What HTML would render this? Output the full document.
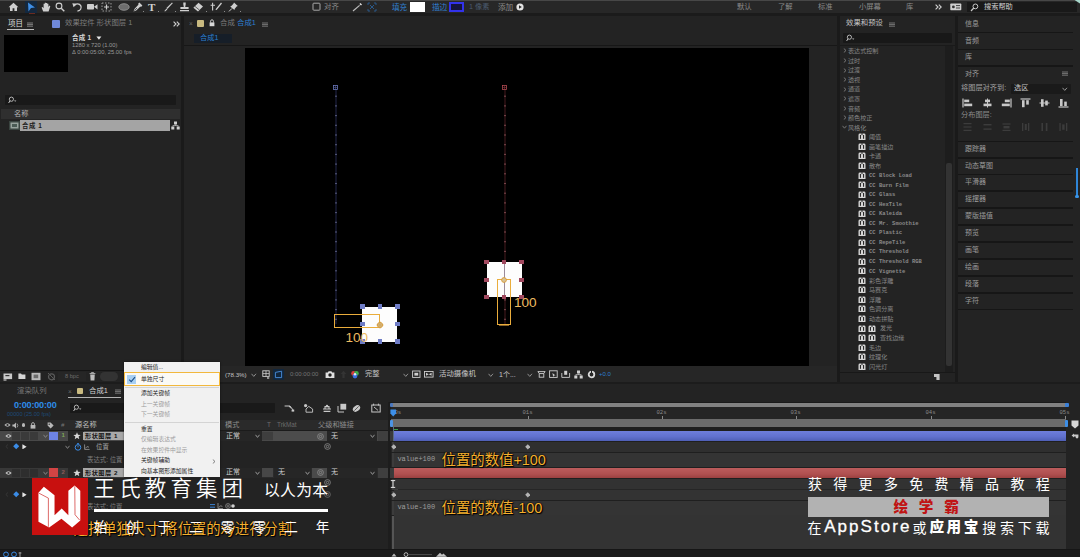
<!DOCTYPE html>
<html><head><meta charset="utf-8">
<style>
*{margin:0;padding:0;box-sizing:border-box}
html,body{width:1080px;height:557px;overflow:hidden;background:#232323}
body{position:relative;font-family:"Liberation Sans","Noto Sans CJK SC",sans-serif;font-size:7.2px;color:#9a9a9a}
.a{position:absolute}
.t{position:absolute;white-space:nowrap}
.m{font-family:"Liberation Mono","Noto Sans CJK SC",monospace}
</style></head><body>
<div class="a" style="left:0px;top:0px;width:1080px;height:14px;background:#272727;"></div>
<div class="a" style="left:0px;top:0px;width:1080px;height:1.2px;background:#474747;"></div>
<div class="a" style="left:0px;top:13.4px;width:1080px;height:2.4px;background:#1b1b1b;"></div>
<div class="a" style="left:0px;top:15.8px;width:181px;height:366px;background:#232323;"></div>
<div class="a" style="left:181px;top:16px;width:2.6px;height:366px;background:#1a1a1a;"></div>
<div class="a" style="left:184px;top:15.8px;width:653px;height:366px;background:#232323;"></div>
<div class="a" style="left:837px;top:16px;width:2.6px;height:366px;background:#1a1a1a;"></div>
<div class="a" style="left:840px;top:15.8px;width:115px;height:366px;background:#232323;"></div>
<div class="a" style="left:955px;top:16px;width:2.6px;height:366px;background:#1a1a1a;"></div>
<div class="a" style="left:958px;top:15.8px;width:122px;height:366px;background:#232323;"></div>
<div class="a" style="left:0px;top:381.8px;width:1080px;height:2px;background:#1c1c1c;"></div>
<div class="a" style="left:0px;top:384px;width:1080px;height:173px;background:#232323;"></div>
<svg class="a" style="left:8px;top:2px;" width="11" height="10" viewBox="0 0 11 10"><path d="M5.5 0.8 L0.6 5.2 H2 V9 H4.6 V6.2 H6.4 V9 H9 V5.2 H10.4 Z" fill="#cfcfcf"/></svg>
<div class="a" style="left:25px;top:1px;width:12px;height:12px;background:#14283e;"></div>
<svg class="a" style="left:26px;top:2px;" width="10" height="10" viewBox="0 0 10 10"><path d="M2 0.5 L9 5.5 L5 6 L2.5 9.6 Z" fill="#3f8fe6"/></svg>
<div class="a" style="left:29px;top:13px;width:6px;height:1px;background:#6a2a20;"></div>
<svg class="a" style="left:41px;top:2px;" width="10" height="10" viewBox="0 0 10 10"><path d="M2.2 9.5 L0.6 5.6 L1.6 5 L2.6 6.2 V1.8 H3.8 V4.6 V0.8 H5 V4.5 V1 H6.2 V4.6 V1.8 H7.4 V5 L8.4 3.6 L9.3 4.2 L7.6 9.5 Z" fill="#cfcfcf"/></svg>
<svg class="a" style="left:55px;top:2px;" width="10" height="10" viewBox="0 0 10 10"><circle cx="4" cy="4" r="2.9" fill="none" stroke="#cfcfcf" stroke-width="1.1"/><path d="M6.2 6.2 L9.3 9.3" stroke="#cfcfcf" stroke-width="1.4"/></svg>
<svg class="a" style="left:72px;top:2px;" width="11" height="10" viewBox="0 0 11 10"><path d="M2.5 3.5 A3.6 3.6 0 1 1 5.5 9" fill="none" stroke="#cfcfcf" stroke-width="1.3"/><path d="M0.3 1.2 L4.8 1.8 L1.6 5.2 Z" fill="#cfcfcf"/></svg>
<svg class="a" style="left:87px;top:3px;" width="11" height="8" viewBox="0 0 11 8"><rect x="0" y="1" width="7" height="5.6" rx="0.8" fill="#cfcfcf"/><path d="M7 3.8 L10.5 1.2 V6.4 Z" fill="#cfcfcf"/></svg>
<svg class="a" style="left:101px;top:2px;" width="11" height="10" viewBox="0 0 11 10"><rect x="1" y="1" width="9" height="8" fill="none" stroke="#9a9a9a" stroke-width="1" stroke-dasharray="1.5 1.5"/><path d="M5.5 2.5 V7.5 M3 5 H8" stroke="#cfcfcf" stroke-width="1.2"/></svg>
<svg class="a" style="left:118px;top:3px;" width="12" height="8" viewBox="0 0 12 8"><ellipse cx="6" cy="4" rx="5.2" ry="3.3" fill="#6e6e6e" stroke="#9a9a9a" stroke-width="0.8"/></svg>
<svg class="a" style="left:133px;top:1.6px;" width="10" height="10" viewBox="0 0 10 10"><path d="M6.4 0.6 L9.4 3.6 L8 5 L7.4 4.4 L3.2 8.4 L0.5 9.5 L1.6 6.8 L5.6 2.6 L5 2 Z" fill="#cfcfcf"/><path d="M1.4 8.6 L4 6" stroke="#2a2a2a" stroke-width="0.7"/></svg>
<div class="t" style="left:148px;top:0.6px;font-size:11px;line-height:13.2px;color:#cfcfcf;font-family:'Liberation Serif',serif;font-weight:bold">T</div>
<svg class="a" style="left:164px;top:2px;" width="9" height="10" viewBox="0 0 9 10"><path d="M8 0.5 L8.8 1.3 L3.4 7 L2.4 6 Z" fill="#cfcfcf"/><path d="M2.6 6.4 L3.4 7.4 L1 9.6 L0.4 9 Z" fill="#cfcfcf"/></svg>
<svg class="a" style="left:179px;top:2px;" width="11" height="10" viewBox="0 0 11 10"><path d="M4.3 0.6 H6.7 V2.2 L6.2 5 H9.6 V7 H1.4 V5 H4.8 L4.3 2.2 Z M1 8 H10 V9.2 H1 Z" fill="#cfcfcf"/></svg>
<svg class="a" style="left:192px;top:2px;" width="12" height="10" viewBox="0 0 12 10"><path d="M6.5 0.8 L11 4.4 L6 9.4 L1.4 5.8 Z" fill="#cfcfcf"/><path d="M3 4.4 L7.4 8" stroke="#444" stroke-width="0.8"/></svg>
<svg class="a" style="left:210px;top:2px;" width="13" height="10" viewBox="0 0 13 10"><path d="M11 0.6 L12 1.4 L6.6 8 L5.4 7.4 Z" fill="#cfcfcf"/><path d="M2.6 0.8 V8.6 M0.6 3.2 H5" stroke="#cfcfcf" stroke-width="1.1"/></svg>
<svg class="a" style="left:228px;top:2px;" width="11" height="10" viewBox="0 0 11 10"><path d="M6 0.6 L9.8 4 L8.6 4.6 L6.8 6.8 L6.4 8 L2.2 4.4 L3.6 3.8 L5.4 1.8 Z" fill="#cfcfcf"/><path d="M4 6.4 L1 9.4" stroke="#cfcfcf" stroke-width="1"/></svg>
<div class="a" style="left:143px;top:11px;width:1px;height:1px;background:#8a8a8a;"></div>
<div class="a" style="left:158px;top:11px;width:1px;height:1px;background:#8a8a8a;"></div>
<div class="a" style="left:175px;top:11px;width:1px;height:1px;background:#8a8a8a;"></div>
<div class="a" style="left:206px;top:11px;width:1px;height:1px;background:#8a8a8a;"></div>
<div class="a" style="left:224px;top:11px;width:1px;height:1px;background:#8a8a8a;"></div>
<div class="a" style="left:240px;top:11px;width:1px;height:1px;background:#8a8a8a;"></div>
<svg class="a" style="left:312px;top:2px;" width="9" height="10" viewBox="0 0 9 10"><rect x="1" y="1.2" width="7" height="7" rx="0.8" fill="none" stroke="#a8a8a8" stroke-width="1"/></svg>
<div class="t" style="left:324px;top:2.76px;font-size:7.4px;line-height:8.88px;color:#8a8a8a;">对齐</div>
<svg class="a" style="left:352px;top:2px;" width="12" height="10" viewBox="0 0 12 10"><path d="M1 9 L7.6 3.4" stroke="#bdbdbd" stroke-width="1.2"/><path d="M8.4 1 L10 2.6 L9 3.6 L7.4 2 Z" fill="#e6e6e6"/></svg>
<svg class="a" style="left:367px;top:2px;" width="10" height="10" viewBox="0 0 10 10"><path d="M1 3 V1 H3 M7 1 H9 V3 M9 7 V9 H7 M3 9 H1 V7 M3 3 L7 7 M7 3 L3 7" fill="none" stroke="#2b5f94" stroke-width="0.9"/></svg>
<div class="t" style="left:392px;top:2.64px;font-size:7.6px;line-height:9.12px;color:#2f7fd0;">填充</div>
<div class="a" style="left:410px;top:2px;width:15px;height:10px;background:#ffffff;"></div>
<div class="t" style="left:432px;top:2.64px;font-size:7.6px;line-height:9.12px;color:#2f7fd0;">描边</div>
<div class="a" style="left:448.5px;top:1.8px;width:15px;height:10.6px;background:#14143c;border:2px solid #3232ea"></div>
<div class="t" style="left:469px;top:2.88px;font-size:7.2px;line-height:8.64px;color:#4a5a6e;">1 像素</div>
<div class="t" style="left:498px;top:2.64px;font-size:7.6px;line-height:9.12px;color:#8c8c8c;">添加</div>
<svg class="a" style="left:516px;top:3px;" width="8" height="8" viewBox="0 0 8 8"><circle cx="4" cy="4" r="3.6" fill="#e2e2e2"/><path d="M3 2.2 L5.8 4 L3 5.8 Z" fill="#262626"/></svg>
<div class="t" style="left:737px;top:2.82px;font-size:7.3px;line-height:8.76px;color:#8a8a8a;">默认</div>
<div class="t" style="left:778px;top:2.82px;font-size:7.3px;line-height:8.76px;color:#8a8a8a;">了解</div>
<div class="t" style="left:818px;top:2.82px;font-size:7.3px;line-height:8.76px;color:#8a8a8a;">标准</div>
<div class="t" style="left:859px;top:2.82px;font-size:7.3px;line-height:8.76px;color:#8a8a8a;">小屏幕</div>
<div class="t" style="left:906px;top:2.82px;font-size:7.3px;line-height:8.76px;color:#8a8a8a;">库</div>
<svg class="a" style="left:935px;top:4px;" width="7" height="6" viewBox="0 0 7 6"><path d="M0.6 0.6 L3 3 L0.6 5.4 M3.8 0.6 L6.2 3 L3.8 5.4" fill="none" stroke="#d0d0d0" stroke-width="1.1"/></svg>
<svg class="a" style="left:950px;top:3px;" width="12" height="8" viewBox="0 0 12 8"><rect x="0.3" y="0.6" width="11" height="6.6" rx="0.6" fill="#d0d0d0"/><circle cx="3.4" cy="3.9" r="1.4" fill="#333"/><path d="M6 2.6 H10 M6 5 H10" stroke="#333" stroke-width="0.9"/></svg>
<div class="a" style="left:967px;top:1.6px;width:110px;height:10.8px;background:#191919;"></div>
<svg class="a" style="left:970px;top:3px;" width="9" height="9" viewBox="0 0 9 9"><circle cx="5.4" cy="3.4" r="2.4" fill="none" stroke="#c8c8c8" stroke-width="1"/><path d="M3.8 5 L1 8" stroke="#c8c8c8" stroke-width="1.2"/></svg>
<div class="t" style="left:984px;top:3.08px;font-size:7.2px;line-height:8.64px;color:#d2d2d2;">搜索帮助</div>
<svg class="a" style="left:1066px;top:0px;" width="14" height="8" viewBox="0 0 14 8"><path d="M8.6 0 H14 V3.6 Z" fill="#a8d8cc"/></svg>
<div class="t" style="left:8px;top:19.4px;font-size:7.5px;line-height:9.0px;color:#dcdcdc;">项目</div>
<svg class="a" style="left:27.0px;top:21.6px;" width="6.4" height="5" viewBox="0 0 6.4 5"><path d="M0 1 H6 M0 2.6 H6 M0 4.2 H6" stroke="#b0b0b0" stroke-width="0.65"/></svg>
<div class="a" style="left:7px;top:29px;width:27px;height:1.4px;background:#bdbdbd;"></div>
<div class="a" style="left:52px;top:20px;width:7.5px;height:7.5px;background:#6f88d8;border-radius:1px"></div>
<div class="t" style="left:65px;top:19.36px;font-size:7.4px;line-height:8.88px;color:#7c7c7c;">效果控件 形状图层 1</div>
<svg class="a" style="left:172.5px;top:20.8px;" width="7" height="6" viewBox="0 0 7 6"><path d="M0.6 0.6 L3 3 L0.6 5.4 M3.8 0.6 L6.2 3 L3.8 5.4" fill="none" stroke="#d0d0d0" stroke-width="1.1"/></svg>
<div class="a" style="left:4px;top:35px;width:64px;height:37px;background:#000;"></div>
<div class="t" style="left:72px;top:34.1px;font-size:6.5px;line-height:7.8px;color:#d6d6d6;font-weight:bold;letter-spacing:0.2px">合成 1</div>
<svg class="a" style="left:96px;top:36px;" width="6" height="4.4" viewBox="0 0 6 4.4"><path d="M0.4 0.6 H5.4 L2.9 3.8 Z" fill="#e6e6e6"/></svg>
<div class="t" style="left:72px;top:41.92px;font-size:5.8px;line-height:6.96px;color:#9a9a9a;">1280 x 720 (1.00)</div>
<div class="t" style="left:72px;top:48.92px;font-size:5.8px;line-height:6.96px;color:#9a9a9a;">Δ 0:00:05:00, 25.00 fps</div>
<div class="a" style="left:5px;top:95px;width:171px;height:10px;background:#191919;border-radius:1px"></div>
<svg class="a" style="left:8px;top:96px;" width="9" height="8" viewBox="0 0 9 8"><circle cx="3.4" cy="3.2" r="2.1" fill="none" stroke="#c4c4c4" stroke-width="0.9"/><path d="M2 4.8 L0.6 7" stroke="#c4c4c4" stroke-width="1"/><path d="M6 4.4 H8.4 L7.2 5.8 Z" fill="#c4c4c4"/></svg>
<div class="a" style="left:1px;top:109px;width:179px;height:10px;background:#2f2f2f;"></div>
<div class="t" style="left:14px;top:110.08px;font-size:7.2px;line-height:8.64px;color:#b4b4b4;">名称</div>
<div class="a" style="left:9px;top:121px;width:11px;height:9px;background:#3a4440;"></div>
<svg class="a" style="left:10px;top:122px;" width="9" height="7" viewBox="0 0 9 7"><rect x="0.5" y="0.5" width="8" height="6" fill="#97a39d"/><rect x="2" y="2" width="5" height="3" fill="#4a5a54"/></svg>
<div class="a" style="left:20px;top:120px;width:150px;height:10.5px;background:#a4a4a4;"></div>
<div class="t" style="left:22px;top:121.56px;font-size:6.4px;line-height:7.68px;color:#1c1c1c;font-weight:bold;letter-spacing:0.6px">合成 1</div>
<svg class="a" style="left:171px;top:121px;" width="9" height="9" viewBox="0 0 9 9"><rect x="3" y="0.5" width="3" height="3" fill="#d0d0d0"/><rect x="0.3" y="5.5" width="3" height="3" fill="#d0d0d0"/><rect x="5.7" y="5.5" width="3" height="3" fill="#d0d0d0"/><path d="M4.5 3.5 V4.6 M1.8 5.5 V4.6 H7.2 V5.5" stroke="#d0d0d0" stroke-width="0.7" fill="none"/></svg>
<div class="a" style="left:0px;top:370px;width:181px;height:1px;background:#151515;"></div>
<div class="a" style="left:0px;top:371px;width:181px;height:11px;background:#232323;"></div>
<svg class="a" style="left:3px;top:372px;" width="10" height="9" viewBox="0 0 10 9"><rect x="0.5" y="1.5" width="8.6" height="5.6" fill="#c8c8c8"/><rect x="2.4" y="3" width="4" height="1.2" fill="#333"/><rect x="0.5" y="7.4" width="3" height="1.2" fill="#c8c8c8"/></svg>
<svg class="a" style="left:18px;top:373px;" width="8" height="7" viewBox="0 0 8 7"><path d="M0.4 0.6 H3 L3.8 1.4 H7.4 V6 H0.4 Z" fill="#d4d4d4"/></svg>
<svg class="a" style="left:31px;top:372px;" width="10" height="9" viewBox="0 0 10 9"><rect x="0.5" y="0.8" width="9" height="7.4" fill="#b8b8b8"/><rect x="2.6" y="2.6" width="4.6" height="3.6" fill="#6a6a6a"/></svg>
<svg class="a" style="left:47px;top:372px;" width="9" height="9" viewBox="0 0 9 9"><circle cx="4.5" cy="4.8" r="3" fill="none" stroke="#5a5a5a" stroke-width="1.2"/><path d="M1 1 L8 8" stroke="#5a5a5a" stroke-width="1"/></svg>
<div class="a" style="left:58px;top:372px;width:28px;height:9px;background:#262626;"></div>
<div class="t" style="left:65px;top:373.24px;font-size:5.6px;line-height:6.72px;color:#6e6e6e;">8 bpc</div>
<svg class="a" style="left:89px;top:372px;" width="7" height="9" viewBox="0 0 7 9"><path d="M0.6 1.6 H6.4 M2.4 1.4 V0.6 H4.6 V1.4" stroke="#bdbdbd" stroke-width="0.9" fill="none"/><path d="M1.2 2.6 H5.8 L5.4 8.4 H1.6 Z" fill="#bdbdbd"/></svg>
<div class="a" style="left:100px;top:372px;width:18px;height:9px;background:#333;border-radius:4.5px"></div>
<div class="t" style="left:189px;top:19.7px;font-size:6.5px;line-height:7.8px;color:#6a6a6a;">×</div>
<div class="a" style="left:197px;top:20px;width:7px;height:7px;background:#c9ba80;border-radius:1px"></div>
<svg class="a" style="left:209px;top:19px;" width="6" height="8" viewBox="0 0 6 8"><path d="M1.6 3.6 V2.2 A1.4 1.4 0 0 1 4.4 2.2 V3.6" fill="none" stroke="#d8d8d8" stroke-width="0.9"/><rect x="0.6" y="3.4" width="4.8" height="3.8" fill="#d8d8d8"/></svg>
<div class="t" style="left:220px;top:19.36px;font-size:7.4px;line-height:8.88px;color:#7a7a7a;">合成</div>
<div class="t" style="left:237px;top:19.36px;font-size:7.4px;line-height:8.88px;color:#2d7fd0;">合成1</div>
<svg class="a" style="left:262.0px;top:21.6px;" width="6.4" height="5" viewBox="0 0 6.4 5"><path d="M0 1 H6 M0 2.6 H6 M0 4.2 H6" stroke="#a0a0a0" stroke-width="0.65"/></svg>
<div class="a" style="left:194px;top:34px;width:38px;height:8.5px;background:#161e28;"></div>
<div class="t" style="left:200px;top:33.88px;font-size:7.2px;line-height:8.64px;color:#2d7fd0;">合成1</div>
<div class="a" style="left:184px;top:45px;width:653px;height:1.2px;background:#171717;"></div>
<div class="a" style="left:245px;top:48px;width:564px;height:318px;background:#000;"></div>
<div class="a" style="left:184px;top:366px;width:653px;height:16px;background:#262626;"></div>
<div class="t" style="left:225px;top:371.08px;font-size:6.2px;line-height:7.44px;color:#c4c4c4;">(78.3%)</div>
<svg class="a" style="left:251px;top:373px;" width="5.5" height="4.5" viewBox="0 0 5.5 4.5"><path d="M0.5 0.8 L2.75 3.4 L5.0 0.8" fill="none" stroke="#9a9a9a" stroke-width="0.9"/></svg>
<svg class="a" style="left:262px;top:370px;" width="9" height="9" viewBox="0 0 9 9"><rect x="0.8" y="0.8" width="6.4" height="5.6" fill="none" stroke="#cfcfcf" stroke-width="0.9"/><path d="M4 0.8 V6.4 M0.8 3.6 H7.2 M6 7 V9 M5 8 H7.4" stroke="#cfcfcf" stroke-width="0.8"/></svg>
<div class="a" style="left:273px;top:369px;width:11px;height:11px;background:#12263c;"></div>
<svg class="a" style="left:274px;top:370px;" width="9" height="9" viewBox="0 0 9 9"><path d="M1.4 2.4 L7.6 1.2 V7.6 H1.4 Z" fill="none" stroke="#4a90e0" stroke-width="0.9"/></svg>
<div class="t" style="left:290px;top:371.2px;font-size:6px;line-height:7.2px;color:#747474;">0:00:00:00</div>
<svg class="a" style="left:325px;top:370px;" width="10" height="9" viewBox="0 0 10 9"><path d="M0.6 2.4 H2.8 L3.6 1.2 H6.4 L7.2 2.4 H9.4 V8 H0.6 Z" fill="#e0e0e0"/><circle cx="5" cy="5" r="1.7" fill="#1f1f1f"/></svg>
<svg class="a" style="left:340px;top:370px;" width="7" height="9" viewBox="0 0 7 9"><path d="M3.5 0.8 L6.4 4 H4.6 V8 H2.4 V4 H0.6 Z" fill="#343434"/></svg>
<svg class="a" style="left:350px;top:370px;" width="10" height="10" viewBox="0 0 10 10"><circle cx="3.6" cy="3.4" r="2.4" fill="#d83a3a"/><circle cx="6.4" cy="3.4" r="2.4" fill="#3fae4a"/><circle cx="5" cy="6" r="2.4" fill="#3a6fe0"/><circle cx="5" cy="4.3" r="1.2" fill="#e8e8e8"/></svg>
<div class="t" style="left:365px;top:370.48px;font-size:7.2px;line-height:8.64px;color:#c8c8c8;">完整</div>
<svg class="a" style="left:403px;top:373px;" width="5.5" height="4.5" viewBox="0 0 5.5 4.5"><path d="M0.5 0.8 L2.75 3.4 L5.0 0.8" fill="none" stroke="#9a9a9a" stroke-width="0.9"/></svg>
<svg class="a" style="left:412px;top:370px;" width="9" height="9" viewBox="0 0 9 9"><rect x="0.6" y="1" width="7.4" height="6.4" fill="none" stroke="#cfcfcf" stroke-width="0.9"/><rect x="2.4" y="2.8" width="3.8" height="2.8" fill="#cfcfcf"/></svg>
<svg class="a" style="left:424px;top:371px;" width="10" height="7" viewBox="0 0 10 7"><rect x="0.5" y="0.5" width="8.6" height="5.6" fill="none" stroke="#cfcfcf" stroke-width="0.9"/><path d="M2 1.8 L4.8 3.3 L2 4.8 Z M7.6 1.8 L4.8 3.3 L7.6 4.8 Z" fill="#cfcfcf"/></svg>
<div class="t" style="left:439px;top:370.36px;font-size:7.4px;line-height:8.88px;color:#c8c8c8;">活动摄像机</div>
<svg class="a" style="left:488px;top:373px;" width="5.5" height="4.5" viewBox="0 0 5.5 4.5"><path d="M0.5 0.8 L2.75 3.4 L5.0 0.8" fill="none" stroke="#9a9a9a" stroke-width="0.9"/></svg>
<div class="t" style="left:499px;top:370.6px;font-size:7px;line-height:8.4px;color:#c8c8c8;">1个...</div>
<svg class="a" style="left:527px;top:373px;" width="5.5" height="4.5" viewBox="0 0 5.5 4.5"><path d="M0.5 0.8 L2.75 3.4 L5.0 0.8" fill="none" stroke="#9a9a9a" stroke-width="0.9"/></svg>
<svg class="a" style="left:537px;top:370px;" width="9" height="9" viewBox="0 0 9 9"><path d="M0.6 1.6 H8.4 M1.6 1.6 V3 M7.4 1.6 V3" stroke="#cfcfcf" stroke-width="0.9" fill="none"/><rect x="2.2" y="3.6" width="4.6" height="3.6" fill="none" stroke="#cfcfcf" stroke-width="0.9"/></svg>
<svg class="a" style="left:549px;top:370px;" width="9" height="9" viewBox="0 0 9 9"><rect x="0.6" y="0.8" width="7.6" height="6.6" fill="none" stroke="#cfcfcf" stroke-width="0.9"/><path d="M3.4 3 L6.6 5.4 L5 5.6 L4.2 7 Z" fill="#cfcfcf"/></svg>
<svg class="a" style="left:561px;top:370px;" width="10" height="9" viewBox="0 0 10 9"><path d="M0.8 3 V7.4 H8.6 V3" fill="none" stroke="#cfcfcf" stroke-width="0.9"/><rect x="3.2" y="0.8" width="3" height="4" fill="#cfcfcf"/></svg>
<svg class="a" style="left:574px;top:370px;" width="9" height="9" viewBox="0 0 9 9"><rect x="3" y="0.5" width="3" height="3" fill="#d0d0d0"/><rect x="0.3" y="5.5" width="3" height="3" fill="#d0d0d0"/><rect x="5.7" y="5.5" width="3" height="3" fill="#d0d0d0"/><path d="M4.5 3.5 V4.6 M1.8 5.5 V4.6 H7.2 V5.5" stroke="#d0d0d0" stroke-width="0.7" fill="none"/></svg>
<svg class="a" style="left:587px;top:370px;" width="9" height="9" viewBox="0 0 9 9"><circle cx="4.5" cy="4.5" r="2.8" fill="none" stroke="#d8d8d8" stroke-width="1.8"/><path d="M4.5 0 V3" stroke="#1f1f1f" stroke-width="1"/></svg>
<div class="t" style="left:599px;top:371.2px;font-size:6px;line-height:7.2px;color:#2d7fd0;">+0.0</div>
<svg class="a" style="left:333.5px;top:84px;" width="4" height="244" viewBox="0 0 4 244"><path d="M2 5.5 V240" stroke="#32386a" stroke-width="0.7"/><rect x="1.45" y="11.65" width="1.1" height="1.1" fill="#8488b8"/><rect x="1.45" y="21.35" width="1.1" height="1.1" fill="#8488b8"/><rect x="1.45" y="31.05" width="1.1" height="1.1" fill="#8488b8"/><rect x="1.45" y="40.75" width="1.1" height="1.1" fill="#8488b8"/><rect x="1.45" y="50.45" width="1.1" height="1.1" fill="#8488b8"/><rect x="1.45" y="60.15" width="1.1" height="1.1" fill="#8488b8"/><rect x="1.45" y="69.85" width="1.1" height="1.1" fill="#8488b8"/><rect x="1.45" y="79.55" width="1.1" height="1.1" fill="#8488b8"/><rect x="1.45" y="89.25" width="1.1" height="1.1" fill="#8488b8"/><rect x="1.45" y="98.95" width="1.1" height="1.1" fill="#8488b8"/><rect x="1.45" y="108.65" width="1.1" height="1.1" fill="#8488b8"/><rect x="1.45" y="118.35" width="1.1" height="1.1" fill="#8488b8"/><rect x="1.45" y="128.05" width="1.1" height="1.1" fill="#8488b8"/><rect x="1.45" y="137.75" width="1.1" height="1.1" fill="#8488b8"/><rect x="1.45" y="147.45" width="1.1" height="1.1" fill="#8488b8"/><rect x="1.45" y="157.15" width="1.1" height="1.1" fill="#8488b8"/><rect x="1.45" y="166.85" width="1.1" height="1.1" fill="#8488b8"/><rect x="1.45" y="176.55" width="1.1" height="1.1" fill="#8488b8"/><rect x="1.45" y="186.25" width="1.1" height="1.1" fill="#8488b8"/><rect x="1.45" y="195.95" width="1.1" height="1.1" fill="#8488b8"/><rect x="1.45" y="205.65" width="1.1" height="1.1" fill="#8488b8"/><rect x="1.45" y="215.35" width="1.1" height="1.1" fill="#8488b8"/><rect x="1.45" y="225.05" width="1.1" height="1.1" fill="#8488b8"/><rect x="1.45" y="234.75" width="1.1" height="1.1" fill="#8488b8"/></svg>
<svg class="a" style="left:502.5px;top:84px;" width="4" height="244" viewBox="0 0 4 244"><path d="M2 5.5 V240" stroke="#64262c" stroke-width="0.7"/><rect x="1.45" y="11.65" width="1.1" height="1.1" fill="#b87078"/><rect x="1.45" y="21.35" width="1.1" height="1.1" fill="#b87078"/><rect x="1.45" y="31.05" width="1.1" height="1.1" fill="#b87078"/><rect x="1.45" y="40.75" width="1.1" height="1.1" fill="#b87078"/><rect x="1.45" y="50.45" width="1.1" height="1.1" fill="#b87078"/><rect x="1.45" y="60.15" width="1.1" height="1.1" fill="#b87078"/><rect x="1.45" y="69.85" width="1.1" height="1.1" fill="#b87078"/><rect x="1.45" y="79.55" width="1.1" height="1.1" fill="#b87078"/><rect x="1.45" y="89.25" width="1.1" height="1.1" fill="#b87078"/><rect x="1.45" y="98.95" width="1.1" height="1.1" fill="#b87078"/><rect x="1.45" y="108.65" width="1.1" height="1.1" fill="#b87078"/><rect x="1.45" y="118.35" width="1.1" height="1.1" fill="#b87078"/><rect x="1.45" y="128.05" width="1.1" height="1.1" fill="#b87078"/><rect x="1.45" y="137.75" width="1.1" height="1.1" fill="#b87078"/><rect x="1.45" y="147.45" width="1.1" height="1.1" fill="#b87078"/><rect x="1.45" y="157.15" width="1.1" height="1.1" fill="#b87078"/><rect x="1.45" y="166.85" width="1.1" height="1.1" fill="#b87078"/><rect x="1.45" y="176.55" width="1.1" height="1.1" fill="#b87078"/><rect x="1.45" y="186.25" width="1.1" height="1.1" fill="#b87078"/><rect x="1.45" y="195.95" width="1.1" height="1.1" fill="#b87078"/><rect x="1.45" y="205.65" width="1.1" height="1.1" fill="#b87078"/><rect x="1.45" y="215.35" width="1.1" height="1.1" fill="#b87078"/><rect x="1.45" y="225.05" width="1.1" height="1.1" fill="#b87078"/><rect x="1.45" y="234.75" width="1.1" height="1.1" fill="#b87078"/></svg>
<svg class="a" style="left:333px;top:84.5px;" width="5" height="5" viewBox="0 0 5 5"><rect x="0.5" y="0.5" width="4" height="4" fill="none" stroke="#6c78bc" stroke-width="0.8"/><path d="M2.5 1 V4 M1 2.5 H4" stroke="#4c5690" stroke-width="0.6"/></svg>
<svg class="a" style="left:502px;top:84.5px;" width="5" height="5" viewBox="0 0 5 5"><rect x="0.5" y="0.5" width="4" height="4" fill="none" stroke="#b24a52" stroke-width="0.8"/><path d="M2.5 1 V4 M1 2.5 H4" stroke="#80323a" stroke-width="0.6"/></svg>
<div class="a" style="left:362px;top:306.5px;width:35px;height:35px;background:#fdfdfd;"></div>
<div class="a" style="left:360.3px;top:304.3px;width:4.4px;height:4.4px;background:#6e7cc6;"></div>
<div class="a" style="left:360.3px;top:321.8px;width:4.4px;height:4.4px;background:#6e7cc6;"></div>
<div class="a" style="left:360.3px;top:339.3px;width:4.4px;height:4.4px;background:#6e7cc6;"></div>
<div class="a" style="left:377.8px;top:304.3px;width:4.4px;height:4.4px;background:#6e7cc6;"></div>
<div class="a" style="left:377.8px;top:339.3px;width:4.4px;height:4.4px;background:#6e7cc6;"></div>
<div class="a" style="left:395.3px;top:304.3px;width:4.4px;height:4.4px;background:#6e7cc6;"></div>
<div class="a" style="left:395.3px;top:321.8px;width:4.4px;height:4.4px;background:#6e7cc6;"></div>
<div class="a" style="left:395.3px;top:339.3px;width:4.4px;height:4.4px;background:#6e7cc6;"></div>
<div class="a" style="left:486.5px;top:262px;width:35px;height:35.3px;background:#fdfdfd;"></div>
<div class="a" style="left:503.6px;top:264px;width:0.8px;height:34px;background:#9a8a9a;"></div>
<div class="a" style="left:484.3px;top:259.8px;width:4.4px;height:4.4px;background:#a0485e;"></div>
<div class="a" style="left:484.3px;top:277.5px;width:4.4px;height:4.4px;background:#a0485e;"></div>
<div class="a" style="left:484.3px;top:295.1px;width:4.4px;height:4.4px;background:#a0485e;"></div>
<div class="a" style="left:501.8px;top:259.8px;width:4.4px;height:4.4px;background:#a0485e;"></div>
<div class="a" style="left:501.8px;top:295.1px;width:4.4px;height:4.4px;background:#a0485e;"></div>
<div class="a" style="left:519.3px;top:259.8px;width:4.4px;height:4.4px;background:#a0485e;"></div>
<div class="a" style="left:519.3px;top:277.5px;width:4.4px;height:4.4px;background:#a0485e;"></div>
<div class="a" style="left:519.3px;top:295.1px;width:4.4px;height:4.4px;background:#a0485e;"></div>
<div class="a" style="left:334.4px;top:314.1px;width:46px;height:13.8px;background:transparent;border:1.6px solid #eaad3c"></div>
<svg class="a" style="left:376px;top:320.5px;" width="8" height="8" viewBox="0 0 8 8"><circle cx="4" cy="4" r="2.6" fill="#cdbb98" stroke="#d89a36" stroke-width="0.9"/><path d="M4 0.4 V7.6 M0.4 4 H7.6" stroke="#d8a040" stroke-width="0.7"/></svg>
<div class="t" style="left:345.5px;top:329.64px;font-size:13.6px;line-height:16.32px;color:#edbb62;">100</div>
<div class="a" style="left:497px;top:278.8px;width:13.8px;height:46.2px;background:transparent;border:1.6px solid #eaad3c"></div>
<svg class="a" style="left:500px;top:275.7px;" width="8" height="8" viewBox="0 0 8 8"><circle cx="4" cy="4" r="2.4" fill="#d8c49a" stroke="#d89a36" stroke-width="0.9"/></svg>
<div class="a" style="left:499px;top:325px;width:10px;height:1px;background:#8a6428;"></div>
<div class="t" style="left:514px;top:294.64px;font-size:13.6px;line-height:16.32px;color:#edbb62;">100</div>
<div class="t" style="left:846px;top:19.36px;font-size:7.4px;line-height:8.88px;color:#c4c4c4;">效果和预设</div>
<svg class="a" style="left:889.0px;top:21.6px;" width="6.4" height="5" viewBox="0 0 6.4 5"><path d="M0 1 H6 M0 2.6 H6 M0 4.2 H6" stroke="#a0a0a0" stroke-width="0.65"/></svg>
<div class="a" style="left:843px;top:33px;width:109px;height:9.5px;background:#181818;border-radius:1px"></div>
<svg class="a" style="left:846px;top:34px;" width="9" height="8" viewBox="0 0 9 8"><circle cx="3.4" cy="3.2" r="2.1" fill="none" stroke="#c4c4c4" stroke-width="0.9"/><path d="M2 4.8 L0.6 7" stroke="#c4c4c4" stroke-width="1"/><path d="M6 4.4 H8.4 L7.2 5.8 Z" fill="#c4c4c4"/></svg>
<div class="a" style="left:840px;top:45px;width:115px;height:1px;background:#1a1a1a;"></div>
<div class="a" style="left:945px;top:46px;width:8px;height:326px;background:#1d1d1d;"></div>
<div class="a" style="left:946px;top:163px;width:6px;height:203px;background:#333333;border-radius:2px"></div>
<svg class="a" style="left:842.5px;top:48.4px;" width="4" height="5" viewBox="0 0 4 5"><path d="M0.8 0.5 L3 2.5 L0.8 4.5" fill="none" stroke="#8a8a8a" stroke-width="0.8"/></svg>
<div class="t" style="left:848px;top:47.24px;font-size:6.1px;line-height:7.32px;color:#878787;">表达式控制</div>
<svg class="a" style="left:842.5px;top:57.96px;" width="4" height="5" viewBox="0 0 4 5"><path d="M0.8 0.5 L3 2.5 L0.8 4.5" fill="none" stroke="#8a8a8a" stroke-width="0.8"/></svg>
<div class="t" style="left:848px;top:56.8px;font-size:6.1px;line-height:7.32px;color:#878787;">过时</div>
<svg class="a" style="left:842.5px;top:67.52px;" width="4" height="5" viewBox="0 0 4 5"><path d="M0.8 0.5 L3 2.5 L0.8 4.5" fill="none" stroke="#8a8a8a" stroke-width="0.8"/></svg>
<div class="t" style="left:848px;top:66.36px;font-size:6.1px;line-height:7.32px;color:#878787;">过渡</div>
<svg class="a" style="left:842.5px;top:77.08px;" width="4" height="5" viewBox="0 0 4 5"><path d="M0.8 0.5 L3 2.5 L0.8 4.5" fill="none" stroke="#8a8a8a" stroke-width="0.8"/></svg>
<div class="t" style="left:848px;top:75.92px;font-size:6.1px;line-height:7.32px;color:#878787;">透视</div>
<svg class="a" style="left:842.5px;top:86.64px;" width="4" height="5" viewBox="0 0 4 5"><path d="M0.8 0.5 L3 2.5 L0.8 4.5" fill="none" stroke="#8a8a8a" stroke-width="0.8"/></svg>
<div class="t" style="left:848px;top:85.48px;font-size:6.1px;line-height:7.32px;color:#878787;">通道</div>
<svg class="a" style="left:842.5px;top:96.2px;" width="4" height="5" viewBox="0 0 4 5"><path d="M0.8 0.5 L3 2.5 L0.8 4.5" fill="none" stroke="#8a8a8a" stroke-width="0.8"/></svg>
<div class="t" style="left:848px;top:95.04px;font-size:6.1px;line-height:7.32px;color:#878787;">遮罩</div>
<svg class="a" style="left:842.5px;top:105.75999999999999px;" width="4" height="5" viewBox="0 0 4 5"><path d="M0.8 0.5 L3 2.5 L0.8 4.5" fill="none" stroke="#8a8a8a" stroke-width="0.8"/></svg>
<div class="t" style="left:848px;top:104.6px;font-size:6.1px;line-height:7.32px;color:#878787;">音频</div>
<svg class="a" style="left:842.5px;top:115.32px;" width="4" height="5" viewBox="0 0 4 5"><path d="M0.8 0.5 L3 2.5 L0.8 4.5" fill="none" stroke="#8a8a8a" stroke-width="0.8"/></svg>
<div class="t" style="left:848px;top:114.16px;font-size:6.1px;line-height:7.32px;color:#878787;">颜色校正</div>
<svg class="a" style="left:842px;top:125.38px;" width="5" height="4.5" viewBox="0 0 5 4.5"><path d="M0.5 0.8 L2.5 3.2 L4.5 0.8" fill="none" stroke="#8a8a8a" stroke-width="0.8"/></svg>
<div class="t" style="left:848px;top:123.72px;font-size:6.1px;line-height:7.32px;color:#878787;">风格化</div>
<svg class="a" style="left:858px;top:133.34px;" width="8" height="7.4" viewBox="0 0 8 7.4"><path d="M0.5 2 Q0.5 0.6 2 0.6 H6 Q7.5 0.6 7.5 2 V7 H0.5 Z" fill="#d6d6d6"/><rect x="1.9" y="2" width="1.1" height="3.8" fill="#2a2a2a"/><rect x="5" y="2" width="1.1" height="3.8" fill="#2a2a2a"/><rect x="3.5" y="0" width="1" height="2.2" fill="#2a2a2a"/></svg>
<div class="t" style="left:869px;top:133.28px;font-size:6.1px;line-height:7.32px;color:#878787;">阈值</div>
<svg class="a" style="left:858px;top:142.9px;" width="8" height="7.4" viewBox="0 0 8 7.4"><path d="M0.5 2 Q0.5 0.6 2 0.6 H6 Q7.5 0.6 7.5 2 V7 H0.5 Z" fill="#d6d6d6"/><rect x="1.9" y="2" width="1.1" height="3.8" fill="#2a2a2a"/><rect x="5" y="2" width="1.1" height="3.8" fill="#2a2a2a"/><rect x="3.5" y="0" width="1" height="2.2" fill="#2a2a2a"/></svg>
<div class="t" style="left:869px;top:142.84px;font-size:6.1px;line-height:7.32px;color:#878787;">画笔描边</div>
<svg class="a" style="left:858px;top:152.46px;" width="8" height="7.4" viewBox="0 0 8 7.4"><path d="M0.5 2 Q0.5 0.6 2 0.6 H6 Q7.5 0.6 7.5 2 V7 H0.5 Z" fill="#d6d6d6"/><rect x="1.9" y="2" width="1.1" height="3.8" fill="#2a2a2a"/><rect x="5" y="2" width="1.1" height="3.8" fill="#2a2a2a"/><rect x="3.5" y="0" width="1" height="2.2" fill="#2a2a2a"/></svg>
<div class="t" style="left:869px;top:152.4px;font-size:6.1px;line-height:7.32px;color:#878787;">卡通</div>
<svg class="a" style="left:858px;top:162.02px;" width="8" height="7.4" viewBox="0 0 8 7.4"><path d="M0.5 2 Q0.5 0.6 2 0.6 H6 Q7.5 0.6 7.5 2 V7 H0.5 Z" fill="#d6d6d6"/><rect x="1.9" y="2" width="1.1" height="3.8" fill="#2a2a2a"/><rect x="5" y="2" width="1.1" height="3.8" fill="#2a2a2a"/><rect x="3.5" y="0" width="1" height="2.2" fill="#2a2a2a"/></svg>
<div class="t" style="left:869px;top:161.96px;font-size:6.1px;line-height:7.32px;color:#878787;">散布</div>
<svg class="a" style="left:858px;top:171.58px;" width="8" height="7.4" viewBox="0 0 8 7.4"><path d="M0.5 2 Q0.5 0.6 2 0.6 H6 Q7.5 0.6 7.5 2 V7 H0.5 Z" fill="#d6d6d6"/><rect x="1.9" y="2" width="1.1" height="3.8" fill="#2a2a2a"/><rect x="5" y="2" width="1.1" height="3.8" fill="#2a2a2a"/><rect x="3.5" y="0" width="1" height="2.2" fill="#2a2a2a"/></svg>
<div class="t m" style="left:869px;top:172.98px;font-size:5.5px;line-height:6.6px;color:#8a8a8a;font-weight:bold">CC Block Load</div>
<svg class="a" style="left:858px;top:181.14000000000001px;" width="8" height="7.4" viewBox="0 0 8 7.4"><path d="M0.5 2 Q0.5 0.6 2 0.6 H6 Q7.5 0.6 7.5 2 V7 H0.5 Z" fill="#d6d6d6"/><rect x="1.9" y="2" width="1.1" height="3.8" fill="#2a2a2a"/><rect x="5" y="2" width="1.1" height="3.8" fill="#2a2a2a"/><rect x="3.5" y="0" width="1" height="2.2" fill="#2a2a2a"/></svg>
<div class="t m" style="left:869px;top:182.54px;font-size:5.5px;line-height:6.6px;color:#8a8a8a;font-weight:bold">CC Burn Film</div>
<svg class="a" style="left:858px;top:190.70000000000002px;" width="8" height="7.4" viewBox="0 0 8 7.4"><path d="M0.5 2 Q0.5 0.6 2 0.6 H6 Q7.5 0.6 7.5 2 V7 H0.5 Z" fill="#d6d6d6"/><rect x="1.9" y="2" width="1.1" height="3.8" fill="#2a2a2a"/><rect x="5" y="2" width="1.1" height="3.8" fill="#2a2a2a"/><rect x="3.5" y="0" width="1" height="2.2" fill="#2a2a2a"/></svg>
<div class="t m" style="left:869px;top:192.1px;font-size:5.5px;line-height:6.6px;color:#8a8a8a;font-weight:bold">CC Glass</div>
<svg class="a" style="left:858px;top:200.26000000000002px;" width="8" height="7.4" viewBox="0 0 8 7.4"><path d="M0.5 2 Q0.5 0.6 2 0.6 H6 Q7.5 0.6 7.5 2 V7 H0.5 Z" fill="#d6d6d6"/><rect x="1.9" y="2" width="1.1" height="3.8" fill="#2a2a2a"/><rect x="5" y="2" width="1.1" height="3.8" fill="#2a2a2a"/><rect x="3.5" y="0" width="1" height="2.2" fill="#2a2a2a"/></svg>
<div class="t m" style="left:869px;top:201.66px;font-size:5.5px;line-height:6.6px;color:#8a8a8a;font-weight:bold">CC HexTile</div>
<svg class="a" style="left:858px;top:209.82000000000002px;" width="8" height="7.4" viewBox="0 0 8 7.4"><path d="M0.5 2 Q0.5 0.6 2 0.6 H6 Q7.5 0.6 7.5 2 V7 H0.5 Z" fill="#d6d6d6"/><rect x="1.9" y="2" width="1.1" height="3.8" fill="#2a2a2a"/><rect x="5" y="2" width="1.1" height="3.8" fill="#2a2a2a"/><rect x="3.5" y="0" width="1" height="2.2" fill="#2a2a2a"/></svg>
<div class="t m" style="left:869px;top:211.22px;font-size:5.5px;line-height:6.6px;color:#8a8a8a;font-weight:bold">CC Kaleida</div>
<svg class="a" style="left:858px;top:219.38000000000002px;" width="8" height="7.4" viewBox="0 0 8 7.4"><path d="M0.5 2 Q0.5 0.6 2 0.6 H6 Q7.5 0.6 7.5 2 V7 H0.5 Z" fill="#d6d6d6"/><rect x="1.9" y="2" width="1.1" height="3.8" fill="#2a2a2a"/><rect x="5" y="2" width="1.1" height="3.8" fill="#2a2a2a"/><rect x="3.5" y="0" width="1" height="2.2" fill="#2a2a2a"/></svg>
<div class="t m" style="left:869px;top:220.78px;font-size:5.5px;line-height:6.6px;color:#8a8a8a;font-weight:bold">CC Mr. Smoothie</div>
<svg class="a" style="left:858px;top:228.94000000000003px;" width="8" height="7.4" viewBox="0 0 8 7.4"><path d="M0.5 2 Q0.5 0.6 2 0.6 H6 Q7.5 0.6 7.5 2 V7 H0.5 Z" fill="#d6d6d6"/><rect x="1.9" y="2" width="1.1" height="3.8" fill="#2a2a2a"/><rect x="5" y="2" width="1.1" height="3.8" fill="#2a2a2a"/><rect x="3.5" y="0" width="1" height="2.2" fill="#2a2a2a"/></svg>
<div class="t m" style="left:869px;top:230.34px;font-size:5.5px;line-height:6.6px;color:#8a8a8a;font-weight:bold">CC Plastic</div>
<svg class="a" style="left:858px;top:238.50000000000003px;" width="8" height="7.4" viewBox="0 0 8 7.4"><path d="M0.5 2 Q0.5 0.6 2 0.6 H6 Q7.5 0.6 7.5 2 V7 H0.5 Z" fill="#d6d6d6"/><rect x="1.9" y="2" width="1.1" height="3.8" fill="#2a2a2a"/><rect x="5" y="2" width="1.1" height="3.8" fill="#2a2a2a"/><rect x="3.5" y="0" width="1" height="2.2" fill="#2a2a2a"/></svg>
<div class="t m" style="left:869px;top:239.9px;font-size:5.5px;line-height:6.6px;color:#8a8a8a;font-weight:bold">CC RepeTile</div>
<svg class="a" style="left:858px;top:248.06000000000003px;" width="8" height="7.4" viewBox="0 0 8 7.4"><path d="M0.5 2 Q0.5 0.6 2 0.6 H6 Q7.5 0.6 7.5 2 V7 H0.5 Z" fill="#d6d6d6"/><rect x="1.9" y="2" width="1.1" height="3.8" fill="#2a2a2a"/><rect x="5" y="2" width="1.1" height="3.8" fill="#2a2a2a"/><rect x="3.5" y="0" width="1" height="2.2" fill="#2a2a2a"/></svg>
<div class="t m" style="left:869px;top:249.46px;font-size:5.5px;line-height:6.6px;color:#8a8a8a;font-weight:bold">CC Threshold</div>
<svg class="a" style="left:858px;top:257.62px;" width="8" height="7.4" viewBox="0 0 8 7.4"><path d="M0.5 2 Q0.5 0.6 2 0.6 H6 Q7.5 0.6 7.5 2 V7 H0.5 Z" fill="#d6d6d6"/><rect x="1.9" y="2" width="1.1" height="3.8" fill="#2a2a2a"/><rect x="5" y="2" width="1.1" height="3.8" fill="#2a2a2a"/><rect x="3.5" y="0" width="1" height="2.2" fill="#2a2a2a"/></svg>
<div class="t m" style="left:869px;top:259.02px;font-size:5.5px;line-height:6.6px;color:#8a8a8a;font-weight:bold">CC Threshold RGB</div>
<svg class="a" style="left:858px;top:267.18px;" width="8" height="7.4" viewBox="0 0 8 7.4"><path d="M0.5 2 Q0.5 0.6 2 0.6 H6 Q7.5 0.6 7.5 2 V7 H0.5 Z" fill="#d6d6d6"/><rect x="1.9" y="2" width="1.1" height="3.8" fill="#2a2a2a"/><rect x="5" y="2" width="1.1" height="3.8" fill="#2a2a2a"/><rect x="3.5" y="0" width="1" height="2.2" fill="#2a2a2a"/></svg>
<div class="t m" style="left:869px;top:268.58px;font-size:5.5px;line-height:6.6px;color:#8a8a8a;font-weight:bold">CC Vignette</div>
<svg class="a" style="left:858px;top:276.73999999999995px;" width="8" height="7.4" viewBox="0 0 8 7.4"><path d="M0.5 2 Q0.5 0.6 2 0.6 H6 Q7.5 0.6 7.5 2 V7 H0.5 Z" fill="#d6d6d6"/><rect x="1.9" y="2" width="1.1" height="3.8" fill="#2a2a2a"/><rect x="5" y="2" width="1.1" height="3.8" fill="#2a2a2a"/><rect x="3.5" y="0" width="1" height="2.2" fill="#2a2a2a"/></svg>
<div class="t" style="left:869px;top:276.68px;font-size:6.1px;line-height:7.32px;color:#878787;">彩色浮雕</div>
<svg class="a" style="left:858px;top:286.29999999999995px;" width="8" height="7.4" viewBox="0 0 8 7.4"><path d="M0.5 2 Q0.5 0.6 2 0.6 H6 Q7.5 0.6 7.5 2 V7 H0.5 Z" fill="#d6d6d6"/><rect x="1.9" y="2" width="1.1" height="3.8" fill="#2a2a2a"/><rect x="5" y="2" width="1.1" height="3.8" fill="#2a2a2a"/><rect x="3.5" y="0" width="1" height="2.2" fill="#2a2a2a"/></svg>
<div class="t" style="left:869px;top:286.24px;font-size:6.1px;line-height:7.32px;color:#878787;">马赛克</div>
<svg class="a" style="left:858px;top:295.85999999999996px;" width="8" height="7.4" viewBox="0 0 8 7.4"><path d="M0.5 2 Q0.5 0.6 2 0.6 H6 Q7.5 0.6 7.5 2 V7 H0.5 Z" fill="#d6d6d6"/><rect x="1.9" y="2" width="1.1" height="3.8" fill="#2a2a2a"/><rect x="5" y="2" width="1.1" height="3.8" fill="#2a2a2a"/><rect x="3.5" y="0" width="1" height="2.2" fill="#2a2a2a"/></svg>
<div class="t" style="left:869px;top:295.8px;font-size:6.1px;line-height:7.32px;color:#878787;">浮雕</div>
<svg class="a" style="left:858px;top:305.41999999999996px;" width="8" height="7.4" viewBox="0 0 8 7.4"><path d="M0.5 2 Q0.5 0.6 2 0.6 H6 Q7.5 0.6 7.5 2 V7 H0.5 Z" fill="#d6d6d6"/><rect x="1.9" y="2" width="1.1" height="3.8" fill="#2a2a2a"/><rect x="5" y="2" width="1.1" height="3.8" fill="#2a2a2a"/><rect x="3.5" y="0" width="1" height="2.2" fill="#2a2a2a"/></svg>
<div class="t" style="left:869px;top:305.36px;font-size:6.1px;line-height:7.32px;color:#878787;">色调分离</div>
<svg class="a" style="left:858px;top:314.97999999999996px;" width="8" height="7.4" viewBox="0 0 8 7.4"><path d="M0.5 2 Q0.5 0.6 2 0.6 H6 Q7.5 0.6 7.5 2 V7 H0.5 Z" fill="#d6d6d6"/><rect x="1.9" y="2" width="1.1" height="3.8" fill="#2a2a2a"/><rect x="5" y="2" width="1.1" height="3.8" fill="#2a2a2a"/><rect x="3.5" y="0" width="1" height="2.2" fill="#2a2a2a"/></svg>
<div class="t" style="left:869px;top:314.92px;font-size:6.1px;line-height:7.32px;color:#878787;">动态拼贴</div>
<svg class="a" style="left:858px;top:324.53999999999996px;" width="8" height="7.4" viewBox="0 0 8 7.4"><path d="M0.5 2 Q0.5 0.6 2 0.6 H6 Q7.5 0.6 7.5 2 V7 H0.5 Z" fill="#d6d6d6"/><rect x="1.9" y="2" width="1.1" height="3.8" fill="#2a2a2a"/><rect x="5" y="2" width="1.1" height="3.8" fill="#2a2a2a"/><rect x="3.5" y="0" width="1" height="2.2" fill="#2a2a2a"/></svg>
<svg class="a" style="left:868px;top:324.53999999999996px;" width="8" height="7.4" viewBox="0 0 8 7.4"><path d="M0.5 2 Q0.5 0.6 2 0.6 H6 Q7.5 0.6 7.5 2 V7 H0.5 Z" fill="#d6d6d6"/><rect x="1.9" y="2" width="1.1" height="3.8" fill="#2a2a2a"/><rect x="5" y="2" width="1.1" height="3.8" fill="#2a2a2a"/><rect x="3.5" y="0" width="1" height="2.2" fill="#2a2a2a"/></svg>
<div class="t" style="left:880px;top:324.48px;font-size:6.1px;line-height:7.32px;color:#878787;">发光</div>
<svg class="a" style="left:858px;top:334.09999999999997px;" width="8" height="7.4" viewBox="0 0 8 7.4"><path d="M0.5 2 Q0.5 0.6 2 0.6 H6 Q7.5 0.6 7.5 2 V7 H0.5 Z" fill="#d6d6d6"/><rect x="1.9" y="2" width="1.1" height="3.8" fill="#2a2a2a"/><rect x="5" y="2" width="1.1" height="3.8" fill="#2a2a2a"/><rect x="3.5" y="0" width="1" height="2.2" fill="#2a2a2a"/></svg>
<svg class="a" style="left:868px;top:334.09999999999997px;" width="8" height="7.4" viewBox="0 0 8 7.4"><path d="M0.5 2 Q0.5 0.6 2 0.6 H6 Q7.5 0.6 7.5 2 V7 H0.5 Z" fill="#d6d6d6"/><rect x="1.9" y="2" width="1.1" height="3.8" fill="#2a2a2a"/><rect x="5" y="2" width="1.1" height="3.8" fill="#2a2a2a"/><rect x="3.5" y="0" width="1" height="2.2" fill="#2a2a2a"/></svg>
<div class="t" style="left:880px;top:334.04px;font-size:6.1px;line-height:7.32px;color:#878787;">查找边缘</div>
<svg class="a" style="left:858px;top:343.65999999999997px;" width="8" height="7.4" viewBox="0 0 8 7.4"><path d="M0.5 2 Q0.5 0.6 2 0.6 H6 Q7.5 0.6 7.5 2 V7 H0.5 Z" fill="#d6d6d6"/><rect x="1.9" y="2" width="1.1" height="3.8" fill="#2a2a2a"/><rect x="5" y="2" width="1.1" height="3.8" fill="#2a2a2a"/><rect x="3.5" y="0" width="1" height="2.2" fill="#2a2a2a"/></svg>
<div class="t" style="left:869px;top:343.6px;font-size:6.1px;line-height:7.32px;color:#878787;">毛边</div>
<svg class="a" style="left:858px;top:353.21999999999997px;" width="8" height="7.4" viewBox="0 0 8 7.4"><path d="M0.5 2 Q0.5 0.6 2 0.6 H6 Q7.5 0.6 7.5 2 V7 H0.5 Z" fill="#d6d6d6"/><rect x="1.9" y="2" width="1.1" height="3.8" fill="#2a2a2a"/><rect x="5" y="2" width="1.1" height="3.8" fill="#2a2a2a"/><rect x="3.5" y="0" width="1" height="2.2" fill="#2a2a2a"/></svg>
<div class="t" style="left:869px;top:353.16px;font-size:6.1px;line-height:7.32px;color:#878787;">纹理化</div>
<svg class="a" style="left:858px;top:362.78px;" width="8" height="7.4" viewBox="0 0 8 7.4"><path d="M0.5 2 Q0.5 0.6 2 0.6 H6 Q7.5 0.6 7.5 2 V7 H0.5 Z" fill="#d6d6d6"/><rect x="1.9" y="2" width="1.1" height="3.8" fill="#2a2a2a"/><rect x="5" y="2" width="1.1" height="3.8" fill="#2a2a2a"/><rect x="3.5" y="0" width="1" height="2.2" fill="#2a2a2a"/></svg>
<div class="t" style="left:869px;top:362.72px;font-size:6.1px;line-height:7.32px;color:#878787;">闪光灯</div>
<div class="a" style="left:840px;top:372px;width:115px;height:1px;background:#181818;"></div>
<svg class="a" style="left:933px;top:373px;" width="8" height="8" viewBox="0 0 8 8"><path d="M1 1 H6.6 V7 H3.4 V4 H1 Z" fill="#c4c4c4"/></svg>
<div class="a" style="left:958px;top:31.5px;width:115px;height:1.6px;background:#161616;"></div>
<div class="a" style="left:958px;top:48.5px;width:115px;height:1.6px;background:#161616;"></div>
<div class="a" style="left:958px;top:65px;width:115px;height:1.6px;background:#161616;"></div>
<div class="a" style="left:958px;top:140.5px;width:115px;height:1.6px;background:#161616;"></div>
<div class="a" style="left:958px;top:157px;width:115px;height:1.6px;background:#161616;"></div>
<div class="a" style="left:958px;top:173.5px;width:115px;height:1.6px;background:#161616;"></div>
<div class="a" style="left:958px;top:190px;width:115px;height:1.6px;background:#161616;"></div>
<div class="a" style="left:958px;top:207px;width:115px;height:1.6px;background:#161616;"></div>
<div class="a" style="left:958px;top:224px;width:115px;height:1.6px;background:#161616;"></div>
<div class="a" style="left:958px;top:241px;width:115px;height:1.6px;background:#161616;"></div>
<div class="a" style="left:958px;top:258px;width:115px;height:1.6px;background:#161616;"></div>
<div class="a" style="left:958px;top:275px;width:115px;height:1.6px;background:#161616;"></div>
<div class="a" style="left:958px;top:292px;width:115px;height:1.6px;background:#161616;"></div>
<div class="a" style="left:958px;top:308.5px;width:115px;height:1.6px;background:#161616;"></div>
<div class="t" style="left:965px;top:20.3px;font-size:7px;line-height:8.4px;color:#9c9c9c;">信息</div>
<div class="t" style="left:965px;top:36.8px;font-size:7px;line-height:8.4px;color:#9c9c9c;">音频</div>
<div class="t" style="left:965px;top:53.3px;font-size:7px;line-height:8.4px;color:#9c9c9c;">库</div>
<div class="t" style="left:965px;top:69.8px;font-size:7px;line-height:8.4px;color:#9c9c9c;">对齐</div>
<div class="t" style="left:965px;top:144.9px;font-size:7px;line-height:8.4px;color:#9c9c9c;">跟踪器</div>
<div class="t" style="left:965px;top:161.5px;font-size:7px;line-height:8.4px;color:#9c9c9c;">动态草图</div>
<div class="t" style="left:965px;top:178.3px;font-size:7px;line-height:8.4px;color:#9c9c9c;">平滑器</div>
<div class="t" style="left:965px;top:195.3px;font-size:7px;line-height:8.4px;color:#9c9c9c;">摇摆器</div>
<div class="t" style="left:965px;top:212.3px;font-size:7px;line-height:8.4px;color:#9c9c9c;">蒙版插值</div>
<div class="t" style="left:965px;top:229.3px;font-size:7px;line-height:8.4px;color:#9c9c9c;">预览</div>
<div class="t" style="left:965px;top:246.3px;font-size:7px;line-height:8.4px;color:#9c9c9c;">画笔</div>
<div class="t" style="left:965px;top:263.3px;font-size:7px;line-height:8.4px;color:#9c9c9c;">绘画</div>
<div class="t" style="left:965px;top:280.3px;font-size:7px;line-height:8.4px;color:#9c9c9c;">段落</div>
<div class="t" style="left:965px;top:297.3px;font-size:7px;line-height:8.4px;color:#9c9c9c;">字符</div>
<svg class="a" style="left:1062.0px;top:71.3px;" width="6.4" height="5" viewBox="0 0 6.4 5"><path d="M0 1 H6 M0 2.6 H6 M0 4.2 H6" stroke="#a0a0a0" stroke-width="0.65"/></svg>
<div class="t" style="left:961px;top:84.08px;font-size:7.2px;line-height:8.64px;color:#a0a0a0;">将图层对齐到:</div>
<div class="a" style="left:1011px;top:84px;width:60px;height:9.6px;background:#1a1a1a;border-radius:1px"></div>
<div class="t" style="left:1014px;top:84.08px;font-size:7.2px;line-height:8.64px;color:#c8c8c8;">选区</div>
<svg class="a" style="left:1062px;top:86.6px;" width="5.5" height="4.5" viewBox="0 0 5.5 4.5"><path d="M0.5 0.8 L2.75 3.4 L5.0 0.8" fill="none" stroke="#a0a0a0" stroke-width="0.9"/></svg>
<svg class="a" style="left:962px;top:97.5px;" width="11" height="10" viewBox="0 0 11 10"><path d="M1 0.5 V9.5" stroke="#c8c8c8" stroke-width="1.2"/><rect x="2.2" y="1.6" width="5" height="2.6" fill="#c8c8c8"/><rect x="2.2" y="5.6" width="8" height="2.6" fill="#c8c8c8"/></svg>
<svg class="a" style="left:982px;top:97.5px;" width="11" height="10" viewBox="0 0 11 10"><path d="M5.5 0.5 V9.5" stroke="#c8c8c8" stroke-width="1"/><rect x="3" y="1.6" width="5" height="2.6" fill="#c8c8c8"/><rect x="1.5" y="5.6" width="8" height="2.6" fill="#c8c8c8"/></svg>
<svg class="a" style="left:1001px;top:97.5px;" width="11" height="10" viewBox="0 0 11 10"><path d="M10 0.5 V9.5" stroke="#c8c8c8" stroke-width="1.2"/><rect x="3.8" y="1.6" width="5" height="2.6" fill="#c8c8c8"/><rect x="0.8" y="5.6" width="8" height="2.6" fill="#c8c8c8"/></svg>
<svg class="a" style="left:1020px;top:97.5px;" width="11" height="10" viewBox="0 0 11 10"><path d="M0.5 1 H10.5" stroke="#c8c8c8" stroke-width="1.2"/><rect x="2" y="2.2" width="2.6" height="7" fill="#c8c8c8"/><rect x="6.2" y="2.2" width="2.6" height="4.4" fill="#c8c8c8"/></svg>
<svg class="a" style="left:1039px;top:97.5px;" width="11" height="10" viewBox="0 0 11 10"><path d="M0.5 5 H10.5" stroke="#c8c8c8" stroke-width="1"/><rect x="2" y="1.2" width="2.6" height="7.6" fill="#c8c8c8"/><rect x="6.2" y="2.6" width="2.6" height="4.8" fill="#c8c8c8"/></svg>
<svg class="a" style="left:1058px;top:97.5px;" width="11" height="10" viewBox="0 0 11 10"><path d="M0.5 9 H10.5" stroke="#c8c8c8" stroke-width="1.2"/><rect x="2" y="1" width="2.6" height="7" fill="#c8c8c8"/><rect x="6.2" y="3.6" width="2.6" height="4.4" fill="#c8c8c8"/></svg>
<div class="t" style="left:961px;top:110.68px;font-size:7.2px;line-height:8.64px;color:#8c8c8c;">分布图层:</div>
<svg class="a" style="left:962px;top:121.5px;" width="11" height="10" viewBox="0 0 11 10"><rect x="1.5" y="1" width="8" height="1.2" fill="#3c3c3c"/><rect x="1.5" y="4.4" width="8" height="1.2" fill="#3c3c3c"/><rect x="1.5" y="7.8" width="8" height="1.2" fill="#3c3c3c"/></svg>
<svg class="a" style="left:982px;top:121.5px;" width="11" height="10" viewBox="0 0 11 10"><rect x="1.5" y="2" width="8" height="1.4" fill="#3c3c3c"/><rect x="1.5" y="6.4" width="8" height="1.4" fill="#3c3c3c"/></svg>
<svg class="a" style="left:1001px;top:121.5px;" width="11" height="10" viewBox="0 0 11 10"><rect x="1.5" y="1.4" width="8" height="1.2" fill="#3c3c3c"/><rect x="2.5" y="4" width="6" height="2.4" fill="#3c3c3c"/><rect x="1.5" y="7.8" width="8" height="1.2" fill="#3c3c3c"/></svg>
<svg class="a" style="left:1020px;top:121.5px;" width="11" height="10" viewBox="0 0 11 10"><rect x="2" y="1" width="1.3" height="8" fill="#3c3c3c"/><rect x="4.8" y="2" width="2" height="6" fill="#3c3c3c"/><rect x="8" y="1" width="1.3" height="8" fill="#3c3c3c"/></svg>
<svg class="a" style="left:1039px;top:121.5px;" width="11" height="10" viewBox="0 0 11 10"><rect x="2.4" y="1" width="1.6" height="8" fill="#3c3c3c"/><rect x="6.8" y="1" width="1.6" height="8" fill="#3c3c3c"/></svg>
<svg class="a" style="left:1058px;top:121.5px;" width="11" height="10" viewBox="0 0 11 10"><rect x="1.4" y="1" width="1.3" height="8" fill="#3c3c3c"/><rect x="4.2" y="2.4" width="2.4" height="5.4" fill="#3c3c3c"/><rect x="8" y="1" width="1.3" height="8" fill="#3c3c3c"/></svg>
<div class="a" style="left:1076.4px;top:168px;width:1.4px;height:29px;background:#2f86d8;"></div>
<div class="a" style="left:1075.4px;top:194.5px;width:3.4px;height:3.4px;background:#3a96ea;border-radius:2px"></div>
<div class="t" style="left:17px;top:386.96px;font-size:7.4px;line-height:8.88px;color:#777777;">渲染队列</div>
<div class="t" style="left:68px;top:387.5px;font-size:6.5px;line-height:7.8px;color:#6a6a6a;">×</div>
<div class="a" style="left:77px;top:388px;width:6px;height:6px;background:#c9ba80;border-radius:1px"></div>
<div class="t" style="left:89px;top:386.96px;font-size:7.4px;line-height:8.88px;color:#cfcfcf;">合成1</div>
<svg class="a" style="left:115.0px;top:389.2px;" width="6.4" height="5" viewBox="0 0 6.4 5"><path d="M0 1 H6 M0 2.6 H6 M0 4.2 H6" stroke="#a0a0a0" stroke-width="0.65"/></svg>
<div class="a" style="left:68px;top:397px;width:53px;height:1.4px;background:#b4b4b4;"></div>
<div class="t" style="left:14px;top:400.34px;font-size:9.1px;line-height:10.92px;color:#2d8cea;font-weight:bold;letter-spacing:-0.2px">0:00:00:00</div>
<div class="t" style="left:7px;top:410.84px;font-size:5.6px;line-height:6.72px;color:#1d4a78;">00000 (25.00 fps)</div>
<div class="a" style="left:70px;top:402.5px;width:205px;height:10.5px;background:#191919;border-radius:1px"></div>
<svg class="a" style="left:73px;top:404px;" width="9" height="8" viewBox="0 0 9 8"><circle cx="3.4" cy="3.2" r="2.1" fill="none" stroke="#c4c4c4" stroke-width="0.9"/><path d="M2 4.8 L0.6 7" stroke="#c4c4c4" stroke-width="1"/><path d="M6 4.4 H8.4 L7.2 5.8 Z" fill="#c4c4c4"/></svg>
<svg class="a" style="left:284px;top:404px;" width="11" height="9" viewBox="0 0 11 9"><path d="M0.6 2 H6 L9.4 6.4 M5 2 L7 4.4" stroke="#c8c8c8" stroke-width="1" fill="none"/><rect x="7.6" y="5.6" width="2.6" height="2" fill="#c8c8c8"/></svg>
<svg class="a" style="left:303px;top:403px;" width="11" height="10" viewBox="0 0 11 10"><circle cx="2.6" cy="2.6" r="1.6" fill="#c8c8c8"/><path d="M5.8 3.4 L9.6 6 V9.2 H3 V6 Z" fill="none" stroke="#c8c8c8" stroke-width="0.9"/></svg>
<svg class="a" style="left:322px;top:404px;" width="10" height="9" viewBox="0 0 10 9"><path d="M1 5 H9 M1.6 7.4 H8.4 M3 5 V2.6 H7 V5" stroke="#c8c8c8" stroke-width="1.1" fill="none"/><circle cx="5" cy="2" r="1.2" fill="#c8c8c8"/></svg>
<svg class="a" style="left:337px;top:403px;" width="10" height="10" viewBox="0 0 10 10"><rect x="3.4" y="0.8" width="5.8" height="5.8" fill="#c8c8c8"/><path d="M1 3 V9 H7" stroke="#c8c8c8" stroke-width="1" fill="none"/></svg>
<svg class="a" style="left:352px;top:404px;" width="9" height="9" viewBox="0 0 9 9"><ellipse cx="4.5" cy="4.5" rx="4" ry="2.8" fill="#c8c8c8" transform="rotate(-35 4.5 4.5)"/><path d="M2.4 6.6 L6.6 2.4" stroke="#2a2a2a" stroke-width="0.7"/></svg>
<svg class="a" style="left:371px;top:403px;" width="10" height="10" viewBox="0 0 10 10"><rect x="0.8" y="2" width="8.4" height="7" fill="none" stroke="#c8c8c8" stroke-width="1"/><path d="M2.6 0.6 V2.6 M7.4 0.6 V2.6 M3 4 L7 7.4" stroke="#c8c8c8" stroke-width="0.9"/></svg>
<div class="a" style="left:0px;top:419.5px;width:388px;height:10.5px;background:#2a2a2a;"></div>
<div class="a" style="left:0px;top:430px;width:388px;height:1px;background:#1b1b1b;"></div>
<svg class="a" style="left:4px;top:422px;" width="7" height="6" viewBox="0 0 7 6"><path d="M0.4 3 Q3.5 -0.6 6.6 3 Q3.5 6.6 0.4 3 Z" fill="#b8b8b8"/><circle cx="3.5" cy="3" r="1.1" fill="#2a2a2a"/></svg>
<svg class="a" style="left:12px;top:421.6px;" width="7" height="7" viewBox="0 0 7 7"><path d="M0.4 2.4 H2 L4 0.6 V6.4 L2 4.6 H0.4 Z" fill="#b8b8b8"/><path d="M5 1.6 Q6.6 3.5 5 5.4" stroke="#b8b8b8" stroke-width="0.8" fill="none"/></svg>
<div class="a" style="left:22px;top:423.4px;width:3.4px;height:3.4px;background:#b8b8b8;border-radius:2px"></div>
<svg class="a" style="left:30px;top:421.5px;" width="6" height="7" viewBox="0 0 6 7"><path d="M1.6 3.2 V2 A1.4 1.4 0 0 1 4.4 2 V3.2" fill="none" stroke="#b8b8b8" stroke-width="0.9"/><rect x="0.6" y="3" width="4.8" height="3.6" fill="#b8b8b8"/></svg>
<svg class="a" style="left:47px;top:421.6px;" width="7" height="7" viewBox="0 0 7 7"><path d="M0.6 0.6 H3.6 L6.6 3.6 L3.6 6.6 L0.6 3.6 Z" fill="#b8b8b8"/><circle cx="2.2" cy="2.2" r="0.7" fill="#2a2a2a"/></svg>
<div class="t" style="left:61px;top:421.8px;font-size:6px;line-height:7.2px;color:#777;font-style:italic">#</div>
<div class="t" style="left:75px;top:420.98px;font-size:7.2px;line-height:8.64px;color:#bdbdbd;">源名称</div>
<div class="t" style="left:225px;top:420.98px;font-size:7.2px;line-height:8.64px;color:#8c8c8c;">模式</div>
<div class="t" style="left:267px;top:421.46px;font-size:6.4px;line-height:7.68px;color:#6e6e6e;">T</div>
<div class="t" style="left:277px;top:421.46px;font-size:6.4px;line-height:7.68px;color:#6a6a6a;">TrkMat</div>
<div class="t" style="left:318px;top:420.98px;font-size:7.2px;line-height:8.64px;color:#8c8c8c;">父级和链接</div>
<div class="a" style="left:0px;top:431px;width:388px;height:10px;background:#484848;"></div>
<svg class="a" style="left:4.5px;top:433px;" width="7" height="6" viewBox="0 0 7 6"><path d="M0.4 3 Q3.5 -0.6 6.6 3 Q3.5 6.6 0.4 3 Z" fill="#c8c8c8"/><circle cx="3.5" cy="3" r="1.1" fill="#484848"/></svg>
<div class="a" style="left:12px;top:432px;width:8px;height:8px;background:#3a3a3a;"></div>
<div class="a" style="left:21px;top:432px;width:8px;height:8px;background:#3a3a3a;"></div>
<div class="a" style="left:30px;top:432px;width:8px;height:8px;background:#3a3a3a;"></div>
<svg class="a" style="left:43px;top:434.3px;" width="5" height="4.5" viewBox="0 0 5 4.5"><path d="M0.5 0.8 L2.5 3.4 L4.5 0.8" fill="none" stroke="#8a8a8a" stroke-width="0.9"/></svg>
<div class="a" style="left:49px;top:431.6px;width:8.6px;height:8.8px;background:#6d83e4;"></div>
<div class="t" style="left:61.5px;top:432.4px;font-size:6px;line-height:7.2px;color:#7ea858;font-weight:bold">1</div>
<div class="a" style="left:68px;top:431px;width:16px;height:10px;background:#262626;"></div>
<svg class="a" style="left:73px;top:432.4px;" width="8" height="7.4" viewBox="0 0 8 7.4"><path d="M4 0.2 L5 2.7 L7.7 2.9 L5.6 4.6 L6.3 7.2 L4 5.8 L1.7 7.2 L2.4 4.6 L0.3 2.9 L3 2.7 Z" fill="#d8d8d8"/></svg>
<div class="a" style="left:83px;top:431.6px;width:41px;height:8.8px;background:#a8a8a8;"></div>
<div class="t" style="left:85px;top:432.28px;font-size:6.2px;line-height:7.44px;color:#151515;font-weight:bold;letter-spacing:0.5px">形状图层 1</div>
<div class="a" style="left:220px;top:431px;width:42px;height:10px;background:#262626;"></div>
<div class="t" style="left:226px;top:431.8px;font-size:7px;line-height:8.4px;color:#d0d0d0;">正常</div>
<svg class="a" style="left:254.5px;top:434.3px;" width="5" height="4.5" viewBox="0 0 5 4.5"><path d="M0.5 0.8 L2.5 3.4 L4.5 0.8" fill="none" stroke="#a0a0a0" stroke-width="0.9"/></svg>
<div class="a" style="left:262px;top:431.6px;width:10.6px;height:8.8px;background:#3e3e3e;"></div>
<div class="a" style="left:273px;top:431px;width:54px;height:10px;background:#4c4c4c;"></div>
<svg class="a" style="left:317px;top:432.5px;" width="7" height="7" viewBox="0 0 7 7"><circle cx="3.5" cy="3.5" r="2.9" fill="none" stroke="#9a9a9a" stroke-width="0.7"/><circle cx="3.5" cy="3.5" r="1.2" fill="none" stroke="#9a9a9a" stroke-width="0.7"/></svg>
<div class="a" style="left:327px;top:431px;width:50px;height:10px;background:#262626;"></div>
<div class="t" style="left:331px;top:431.8px;font-size:7px;line-height:8.4px;color:#d0d0d0;">无</div>
<svg class="a" style="left:369.5px;top:434.3px;" width="5" height="4.5" viewBox="0 0 5 4.5"><path d="M0.5 0.8 L2.5 3.4 L4.5 0.8" fill="none" stroke="#a0a0a0" stroke-width="0.9"/></svg>
<div class="a" style="left:378px;top:431px;width:10px;height:10px;background:#3f3f3f;"></div>
<div class="a" style="left:0px;top:467.6px;width:388px;height:10px;background:#383838;"></div>
<div class="a" style="left:124px;top:467.6px;width:264px;height:10px;background:#2b2b2b;"></div>
<svg class="a" style="left:4.5px;top:469.6px;" width="7" height="6" viewBox="0 0 7 6"><path d="M0.4 3 Q3.5 -0.6 6.6 3 Q3.5 6.6 0.4 3 Z" fill="#c8c8c8"/><circle cx="3.5" cy="3" r="1.1" fill="#383838"/></svg>
<div class="a" style="left:12px;top:468.6px;width:8px;height:8px;background:#2e2e2e;"></div>
<div class="a" style="left:21px;top:468.6px;width:8px;height:8px;background:#2e2e2e;"></div>
<div class="a" style="left:30px;top:468.6px;width:8px;height:8px;background:#2e2e2e;"></div>
<svg class="a" style="left:43px;top:470.90000000000003px;" width="5" height="4.5" viewBox="0 0 5 4.5"><path d="M0.5 0.8 L2.5 3.4 L4.5 0.8" fill="none" stroke="#8a8a8a" stroke-width="0.9"/></svg>
<div class="a" style="left:49px;top:468.20000000000005px;width:8.6px;height:8.8px;background:#d24444;"></div>
<div class="t" style="left:61.5px;top:469.0px;font-size:6px;line-height:7.2px;color:#8e5a5a;font-weight:bold">2</div>
<div class="a" style="left:68px;top:467.6px;width:16px;height:10px;background:#262626;"></div>
<svg class="a" style="left:73px;top:469.0px;" width="8" height="7.4" viewBox="0 0 8 7.4"><path d="M4 0.2 L5 2.7 L7.7 2.9 L5.6 4.6 L6.3 7.2 L4 5.8 L1.7 7.2 L2.4 4.6 L0.3 2.9 L3 2.7 Z" fill="#d8d8d8"/></svg>
<div class="a" style="left:83px;top:468.20000000000005px;width:41px;height:8.8px;background:#a8a8a8;"></div>
<div class="t" style="left:85px;top:468.88px;font-size:6.2px;line-height:7.44px;color:#151515;font-weight:bold;letter-spacing:0.5px">形状图层 2</div>
<div class="a" style="left:220px;top:467.6px;width:42px;height:10px;background:#262626;"></div>
<div class="t" style="left:226px;top:468.4px;font-size:7px;line-height:8.4px;color:#d0d0d0;">正常</div>
<svg class="a" style="left:254.5px;top:470.90000000000003px;" width="5" height="4.5" viewBox="0 0 5 4.5"><path d="M0.5 0.8 L2.5 3.4 L4.5 0.8" fill="none" stroke="#a0a0a0" stroke-width="0.9"/></svg>
<div class="a" style="left:262px;top:468.20000000000005px;width:10.6px;height:8.8px;background:#474747;"></div>
<div class="a" style="left:274px;top:467.6px;width:37px;height:10px;background:#262626;"></div>
<div class="t" style="left:278px;top:468.4px;font-size:7px;line-height:8.4px;color:#d0d0d0;">无</div>
<svg class="a" style="left:304.5px;top:470.90000000000003px;" width="5" height="4.5" viewBox="0 0 5 4.5"><path d="M0.5 0.8 L2.5 3.4 L4.5 0.8" fill="none" stroke="#a0a0a0" stroke-width="0.9"/></svg>
<div class="a" style="left:312px;top:467.6px;width:15px;height:10px;background:#4a4a4a;"></div>
<svg class="a" style="left:317px;top:469.1px;" width="7" height="7" viewBox="0 0 7 7"><circle cx="3.5" cy="3.5" r="2.9" fill="none" stroke="#9a9a9a" stroke-width="0.7"/><circle cx="3.5" cy="3.5" r="1.2" fill="none" stroke="#9a9a9a" stroke-width="0.7"/></svg>
<div class="a" style="left:327px;top:467.6px;width:50px;height:10px;background:#262626;"></div>
<div class="t" style="left:331px;top:468.4px;font-size:7px;line-height:8.4px;color:#d0d0d0;">无</div>
<svg class="a" style="left:369.5px;top:470.90000000000003px;" width="5" height="4.5" viewBox="0 0 5 4.5"><path d="M0.5 0.8 L2.5 3.4 L4.5 0.8" fill="none" stroke="#a0a0a0" stroke-width="0.9"/></svg>
<div class="a" style="left:378px;top:467.6px;width:10px;height:10px;background:#3f3f3f;"></div>
<svg class="a" style="left:13px;top:443.40000000000003px;" width="6.4" height="6.4" viewBox="0 0 6.4 6.4"><path d="M3.2 0.2 L6.2 3.2 L3.2 6.2 L0.2 3.2 Z" fill="#3b8ce6"/></svg>
<svg class="a" style="left:5px;top:444.1px;" width="4" height="5" viewBox="0 0 4 5"><path d="M3 0.5 L0.8 2.5 L3 4.5" fill="none" stroke="#3c3c3c" stroke-width="0.8"/></svg>
<svg class="a" style="left:22px;top:443.8px;" width="5" height="5.6" viewBox="0 0 5 5.6"><path d="M0.4 0.2 L4.6 2.8 L0.4 5.4 Z" fill="#e4e4e4"/></svg>
<svg class="a" style="left:65px;top:444.90000000000003px;" width="5" height="4.5" viewBox="0 0 5 4.5"><path d="M0.5 0.8 L2.5 3.4 L4.5 0.8" fill="none" stroke="#8a8a8a" stroke-width="0.9"/></svg>
<svg class="a" style="left:74px;top:442.6px;" width="8" height="8" viewBox="0 0 8 8"><circle cx="4" cy="4.4" r="2.8" fill="none" stroke="#3b8ce6" stroke-width="1"/><path d="M4 4.4 V2.6 M3 0.6 H5" stroke="#3b8ce6" stroke-width="0.9"/></svg>
<svg class="a" style="left:84px;top:443.6px;" width="6" height="6" viewBox="0 0 6 6"><path d="M0.6 0.4 V5.4 H5.6 M1.4 4.4 L3 2.6 L5 3.2" fill="none" stroke="#9a9a9a" stroke-width="0.8"/></svg>
<div class="t" style="left:96px;top:442.76px;font-size:6.4px;line-height:7.68px;color:#a8a8a8;">位置</div>
<svg class="a" style="left:324px;top:443.3px;" width="7" height="7" viewBox="0 0 7 7"><circle cx="3.5" cy="3.5" r="2.9" fill="none" stroke="#9a9a9a" stroke-width="0.7"/><circle cx="3.5" cy="3.5" r="1.2" fill="none" stroke="#9a9a9a" stroke-width="0.7"/></svg>
<div class="t" style="left:87px;top:455.76px;font-size:6.4px;line-height:7.68px;color:#7e7e7e;">表达式: 位置</div>
<svg class="a" style="left:13px;top:491.4px;" width="6.4" height="6.4" viewBox="0 0 6.4 6.4"><path d="M3.2 0.2 L6.2 3.2 L3.2 6.2 L0.2 3.2 Z" fill="#3b8ce6"/></svg>
<svg class="a" style="left:5px;top:492.1px;" width="4" height="5" viewBox="0 0 4 5"><path d="M3 0.5 L0.8 2.5 L3 4.5" fill="none" stroke="#3c3c3c" stroke-width="0.8"/></svg>
<svg class="a" style="left:22px;top:491.8px;" width="5" height="5.6" viewBox="0 0 5 5.6"><path d="M0.4 0.2 L4.6 2.8 L0.4 5.4 Z" fill="#e4e4e4"/></svg>
<svg class="a" style="left:324px;top:478.9px;" width="7" height="7" viewBox="0 0 7 7"><circle cx="3.5" cy="3.5" r="2.9" fill="none" stroke="#9a9a9a" stroke-width="0.7"/><circle cx="3.5" cy="3.5" r="1.2" fill="none" stroke="#9a9a9a" stroke-width="0.7"/></svg>
<svg class="a" style="left:324px;top:490.9px;" width="7" height="7" viewBox="0 0 7 7"><circle cx="3.5" cy="3.5" r="2.9" fill="none" stroke="#7a7a7a" stroke-width="0.7"/><circle cx="3.5" cy="3.5" r="1.2" fill="none" stroke="#7a7a7a" stroke-width="0.7"/></svg>
<div class="t" style="left:87px;top:502.56px;font-size:6.4px;line-height:7.68px;color:#7e7e7e;">表达式: 位置</div>
<svg class="a" style="left:209px;top:502px;" width="26" height="8" viewBox="0 0 26 8"><path d="M1 2.6 H6 M1 5.2 H6" stroke="#3b8ce6" stroke-width="0.9"/><path d="M9 1 V6.6 H14 M9.8 5.6 L11.4 3.8 L13.4 4.4" fill="none" stroke="#9a9a9a" stroke-width="0.8"/><circle cx="19" cy="4" r="2.4" fill="none" stroke="#9a9a9a" stroke-width="0.7"/><circle cx="19" cy="4" r="0.9" fill="none" stroke="#9a9a9a" stroke-width="0.6"/><circle cx="24" cy="4" r="1.8" fill="#d0d0d0"/></svg>
<div class="a" style="left:388.4px;top:402px;width:2.6px;height:147px;background:#1d1d1d;"></div>
<div class="a" style="left:391px;top:402px;width:675px;height:147px;background:#262626;"></div>
<div class="a" style="left:389px;top:402px;width:677px;height:1px;background:#1a1a1a;"></div>
<div class="a" style="left:1066px;top:402px;width:14px;height:147px;background:#232323;"></div>
<div class="a" style="left:391px;top:403px;width:675px;height:4px;background:#818181;"></div>
<div class="a" style="left:390px;top:403px;width:3.4px;height:4px;background:#4a78c0;border-radius:1px"></div>
<div class="a" style="left:1065px;top:403px;width:4px;height:4px;background:#3a80d8;border-radius:1px"></div>
<div class="a" style="left:391px;top:407.3px;width:675px;height:11.4px;background:#252525;"></div>
<div class="t m" style="left:394.5px;top:409.64px;font-size:5.6px;line-height:6.72px;color:#8a8a8a;">0s</div>
<div class="t m" style="left:522.5px;top:409.64px;font-size:5.6px;line-height:6.72px;color:#8a8a8a;">01s</div>
<div class="t m" style="left:656.5px;top:409.64px;font-size:5.6px;line-height:6.72px;color:#8a8a8a;">02s</div>
<div class="t m" style="left:790.5px;top:409.64px;font-size:5.6px;line-height:6.72px;color:#8a8a8a;">03s</div>
<div class="t m" style="left:925.5px;top:409.64px;font-size:5.6px;line-height:6.72px;color:#8a8a8a;">04s</div>
<div class="t m" style="left:1059.5px;top:409.64px;font-size:5.6px;line-height:6.72px;color:#8a8a8a;">05s</div>
<div class="a" style="left:527.5px;top:415.5px;width:0.8px;height:3.2px;background:#8a8a8a;"></div>
<div class="a" style="left:661.5px;top:415.5px;width:0.8px;height:3.2px;background:#8a8a8a;"></div>
<div class="a" style="left:796px;top:415.5px;width:0.8px;height:3.2px;background:#8a8a8a;"></div>
<div class="a" style="left:930.5px;top:415.5px;width:0.8px;height:3.2px;background:#8a8a8a;"></div>
<div class="a" style="left:1065px;top:415.5px;width:0.8px;height:3.2px;background:#8a8a8a;"></div>
<div class="a" style="left:391px;top:419.2px;width:675px;height:8px;background:#6b6b6b;"></div>
<div class="a" style="left:390px;top:419.6px;width:2.6px;height:7.4px;background:#4c94e4;border-radius:1px"></div>
<div class="a" style="left:1065px;top:419.6px;width:3.4px;height:7.4px;background:#3d8fe8;border-radius:1px"></div>
<svg class="a" style="left:1070.5px;top:420px;" width="8" height="9" viewBox="0 0 8 9"><path d="M0.5 0.5 H7.5 V5.4 L4 8.4 L0.5 5.4 Z" fill="#d6d6d6"/></svg>
<div class="a" style="left:391px;top:427.2px;width:675px;height:3.6px;background:#1e1e1e;"></div>
<div class="a" style="left:393px;top:429px;width:5px;height:1px;background:#3aa04a;"></div>
<svg class="a" style="left:390.4px;top:409.4px;" width="6.4" height="8" viewBox="0 0 6.4 8"><path d="M0.4 0.4 H6 V4.6 L3.2 7.6 L0.4 4.6 Z" fill="#3d8fe8"/></svg>
<div class="a" style="left:392.4px;top:441px;width:5.2px;height:74px;background:rgba(255,255,255,0.10);"></div>
<div class="a" style="left:392.4px;top:515px;width:5.2px;height:34px;background:rgba(255,255,255,0.22);"></div>
<div class="a" style="left:393px;top:427px;width:0.8px;height:14px;background:#5a6a80;"></div>
<div class="a" style="left:393.6px;top:431.2px;width:672px;height:9.8px;background:linear-gradient(#6e7edc,#6171cf 55%,#4f5fb6)"></div>
<div class="a" style="left:393.6px;top:468.2px;width:672px;height:9.4px;background:linear-gradient(#bc5c5c,#b05050 60%,#9a4040)"></div>
<div class="a" style="left:390px;top:431.2px;width:3.4px;height:9.8px;background:#3a3a3a;"></div>
<div class="a" style="left:390px;top:468.2px;width:3.4px;height:9.4px;background:#3a3a3a;"></div>
<div class="a" style="left:391px;top:441.4px;width:675px;height:0.8px;background:#1f1f1f;"></div>
<div class="a" style="left:391px;top:452px;width:675px;height:0.8px;background:#1f1f1f;"></div>
<div class="a" style="left:391px;top:467.4px;width:675px;height:0.8px;background:#1f1f1f;"></div>
<div class="a" style="left:391px;top:478px;width:675px;height:0.8px;background:#1f1f1f;"></div>
<div class="a" style="left:391px;top:489.6px;width:675px;height:0.8px;background:#1f1f1f;"></div>
<div class="a" style="left:391px;top:500px;width:675px;height:0.8px;background:#1f1f1f;"></div>
<div class="a" style="left:391px;top:514.6px;width:675px;height:0.8px;background:#1f1f1f;"></div>
<div class="a" style="left:394px;top:442.2px;width:672px;height:9.6px;background:#2f2f2f;"></div>
<div class="a" style="left:394px;top:452.8px;width:672px;height:14.6px;background:#343434;"></div>
<div class="a" style="left:394px;top:478.8px;width:672px;height:10.6px;background:#323232;"></div>
<div class="a" style="left:394px;top:490.4px;width:672px;height:9.6px;background:#333333;"></div>
<div class="a" style="left:394px;top:500.8px;width:672px;height:13.8px;background:#343434;"></div>
<div class="a" style="left:394px;top:515.4px;width:672px;height:34px;background:#333333;"></div>
<svg class="a" style="left:390.8px;top:444.0px;" width="5.6" height="5.6" viewBox="0 0 5.6 5.6"><path d="M2.8 0.2 L5.4 2.8 L2.8 5.4 L0.2 2.8 Z" fill="#b4b4b4"/></svg>
<svg class="a" style="left:524.8000000000001px;top:444.0px;" width="5.6" height="5.6" viewBox="0 0 5.6 5.6"><path d="M2.8 0.2 L5.4 2.8 L2.8 5.4 L0.2 2.8 Z" fill="#b4b4b4"/></svg>
<svg class="a" style="left:390.8px;top:492.0px;" width="5.6" height="5.6" viewBox="0 0 5.6 5.6"><path d="M2.8 0.2 L5.4 2.8 L2.8 5.4 L0.2 2.8 Z" fill="#b4b4b4"/></svg>
<svg class="a" style="left:524.8000000000001px;top:492.0px;" width="5.6" height="5.6" viewBox="0 0 5.6 5.6"><path d="M2.8 0.2 L5.4 2.8 L2.8 5.4 L0.2 2.8 Z" fill="#b4b4b4"/></svg>
<div class="t m" style="left:397.4px;top:455.2px;font-size:7px;line-height:8.4px;color:#9e9e9e;">value+100</div>
<div class="t m" style="left:397.4px;top:503.2px;font-size:7px;line-height:8.4px;color:#9e9e9e;">value-100</div>
<svg class="a" style="left:390.4px;top:479.6px;" width="6" height="8" viewBox="0 0 6 8"><path d="M0.8 0.6 H5.2 M0.8 7.4 H5.2 M3 0.6 V7.4" stroke="#e4e4e4" stroke-width="1"/></svg>
<svg class="a" style="left:1070.5px;top:432px;" width="8" height="7" viewBox="0 0 8 7"><path d="M0.6 3.4 L3 1.4 V2.6 H7.4 V4.4 H3 V5.6 Z" fill="#c8c8c8"/><circle cx="6" cy="5" r="1.4" fill="#c8c8c8"/></svg>
<div class="t" style="left:441.5px;top:452.16px;font-size:14.4px;line-height:17.28px;color:#f5b02e;text-shadow:0 0 2px #000,0 0 1px #000,1px 1px 1px #000">位置的数值+100</div>
<div class="t" style="left:441.5px;top:500.16px;font-size:14.4px;line-height:17.28px;color:#f5b02e;text-shadow:0 0 2px #000,0 0 1px #000,1px 1px 1px #000">位置的数值-100</div>
<div class="a" style="left:0px;top:549.5px;width:1080px;height:7.5px;background:#1d1d1d;"></div>
<div class="a" style="left:0px;top:549px;width:1080px;height:0.8px;background:#161616;"></div>
<svg class="a" style="left:3px;top:550.5px;" width="20" height="6.5" viewBox="0 0 20 6.5"><circle cx="3" cy="3.4" r="2.4" fill="none" stroke="#3b8ce6" stroke-width="1"/><circle cx="11" cy="3.4" r="2.4" fill="none" stroke="#3b8ce6" stroke-width="1"/><path d="M17 1 V6 M15.6 2 H18.4" stroke="#9a9a9a" stroke-width="1"/></svg>
<div class="a" style="left:123.5px;top:361.8px;width:96.5px;height:115.4px;background:#f1f1f1;box-shadow:0 0 2px rgba(0,0,0,.6)"></div>
<div class="a" style="left:124px;top:372.2px;width:95.8px;height:13.6px;background:#fbfaf6;border:1.9px solid #f2b83c"></div>
<div class="a" style="left:126.6px;top:374.6px;width:9.4px;height:9.4px;background:#a9d0f2;"></div>
<svg class="a" style="left:127.6px;top:376px;" width="8" height="7" viewBox="0 0 8 7"><path d="M1.2 3.6 L3.2 5.6 L7 1.2" fill="none" stroke="#1b4f8a" stroke-width="1.1"/></svg>
<div class="t" style="left:141px;top:364.32px;font-size:5.8px;line-height:6.96px;color:#1e1e1e;">编辑值...</div>
<div class="t" style="left:141px;top:375.72px;font-size:5.8px;line-height:6.96px;color:#1e1e1e;">单独尺寸</div>
<div class="t" style="left:141px;top:390.02px;font-size:5.8px;line-height:6.96px;color:#1e1e1e;">添加关键帧</div>
<div class="t" style="left:141px;top:400.52px;font-size:5.8px;line-height:6.96px;color:#9c9c9c;">上一关键帧</div>
<div class="t" style="left:141px;top:411.12px;font-size:5.8px;line-height:6.96px;color:#9c9c9c;">下一关键帧</div>
<div class="t" style="left:141px;top:425.52px;font-size:5.8px;line-height:6.96px;color:#1e1e1e;">重置</div>
<div class="t" style="left:141px;top:436.12px;font-size:5.8px;line-height:6.96px;color:#9c9c9c;">仅编辑表达式</div>
<div class="t" style="left:141px;top:446.72px;font-size:5.8px;line-height:6.96px;color:#9c9c9c;">在效果控件中显示</div>
<div class="t" style="left:141px;top:457.32px;font-size:5.8px;line-height:6.96px;color:#1e1e1e;">关键帧辅助</div>
<div class="t" style="left:141px;top:467.72px;font-size:5.8px;line-height:6.96px;color:#1e1e1e;">向基本图形添加属性</div>
<div class="a" style="left:124.5px;top:386.8px;width:94.5px;height:0.6px;background:#d4d4d4;"></div>
<div class="a" style="left:124.5px;top:421.6px;width:94.5px;height:0.6px;background:#d4d4d4;"></div>
<svg class="a" style="left:211.5px;top:458.6px;" width="4" height="5" viewBox="0 0 4 5"><path d="M0.8 0.5 L3 2.5 L0.8 4.5" fill="none" stroke="#555" stroke-width="0.7"/></svg>
<div class="t" style="left:73.6px;top:521.22px;font-size:14.3px;line-height:17.16px;color:#f5b030;text-shadow:0 0 1.5px #000,0 0 1.5px #000,1px 1px 1px #000">选择单独尺寸,将位置的xy进行分割</div>
<div class="a" style="left:31.5px;top:478.3px;width:56.5px;height:56.7px;background:#c8100f;"></div>
<svg class="a" style="left:25px;top:472px" width="70" height="70" viewBox="0 0 557 557"><path d="M107 165 L150 118 L235 185 L235 345 L292 290 L345 345 L345 150 L395 108 L440 150 L440 385 L375 442 L290 372 L192 442 L107 395 Z" fill="#ffffff"/><path d="M110 168 L186 208 L186 436 M396 114 L398 340 L436 384" stroke="#c8100f" stroke-width="5" fill="none"/></svg>
<div class="t" style="left:93.6px;top:476.5px;font-size:21.5px;line-height:25.8px;color:#ffffff;letter-spacing:4.1px;font-weight:350">王氏教育集团</div>
<div class="t" style="left:264px;top:482.32px;font-size:15.8px;line-height:18.96px;color:#ffffff;letter-spacing:0.3px">以人为本</div>
<div class="a" style="left:94px;top:509px;width:234px;height:2.8px;background:#ffffff;"></div>
<div class="t" style="left:94px;top:520.04px;font-size:13.6px;line-height:16.32px;color:#ffffff;letter-spacing:18.1px">始创于二零零二年</div>
<div class="t" style="left:808px;top:476.4px;font-size:14px;line-height:16.8px;color:#ffffff;letter-spacing:11.3px">获得更多免费精品教程</div>
<div class="a" style="left:808px;top:496.6px;width:241.4px;height:20.4px;background:#b2b2b2;"></div>
<div class="t" style="left:893.4px;top:498.54px;font-size:14.6px;line-height:17.52px;color:#c01414;font-weight:900;letter-spacing:10.8px">绘学霸</div>
<div class="t" style="left:807.6px;top:519.8px;font-size:14px;line-height:16.8px;color:#ffffff;">在</div>
<div class="t" style="left:824.2px;top:517.2px;font-size:17px;line-height:20.4px;color:#ffffff;letter-spacing:2.05px;-webkit-text-stroke:0.3px #fff">AppStore</div>
<div class="t" style="left:912.4px;top:519.8px;font-size:14px;line-height:16.8px;color:#ffffff;">或</div>
<div class="t" style="left:929.4px;top:519.44px;font-size:14.6px;line-height:17.52px;color:#ffffff;font-weight:900;letter-spacing:2.6px">应用宝</div>
<div class="t" style="left:982.2px;top:519.8px;font-size:14px;line-height:16.8px;color:#ffffff;letter-spacing:3.8px">搜索下载</div>
<svg class="a" style="left:391px;top:552px;" width="58" height="5" viewBox="0 0 58 5"><path d="M0.5 4.5 L3 1.6 L5.5 4.5 Z" fill="#b8b8b8"/><circle cx="15" cy="2.6" r="1.9" fill="none" stroke="#c8c8c8" stroke-width="0.9"/><path d="M17 2.6 H41" stroke="#5a5a5a" stroke-width="0.8"/><path d="M45 4.8 L49 0.8 L51 2.8 L52.4 1.4 L56 4.8 Z" fill="#c4c4c4"/></svg>
</body></html>
